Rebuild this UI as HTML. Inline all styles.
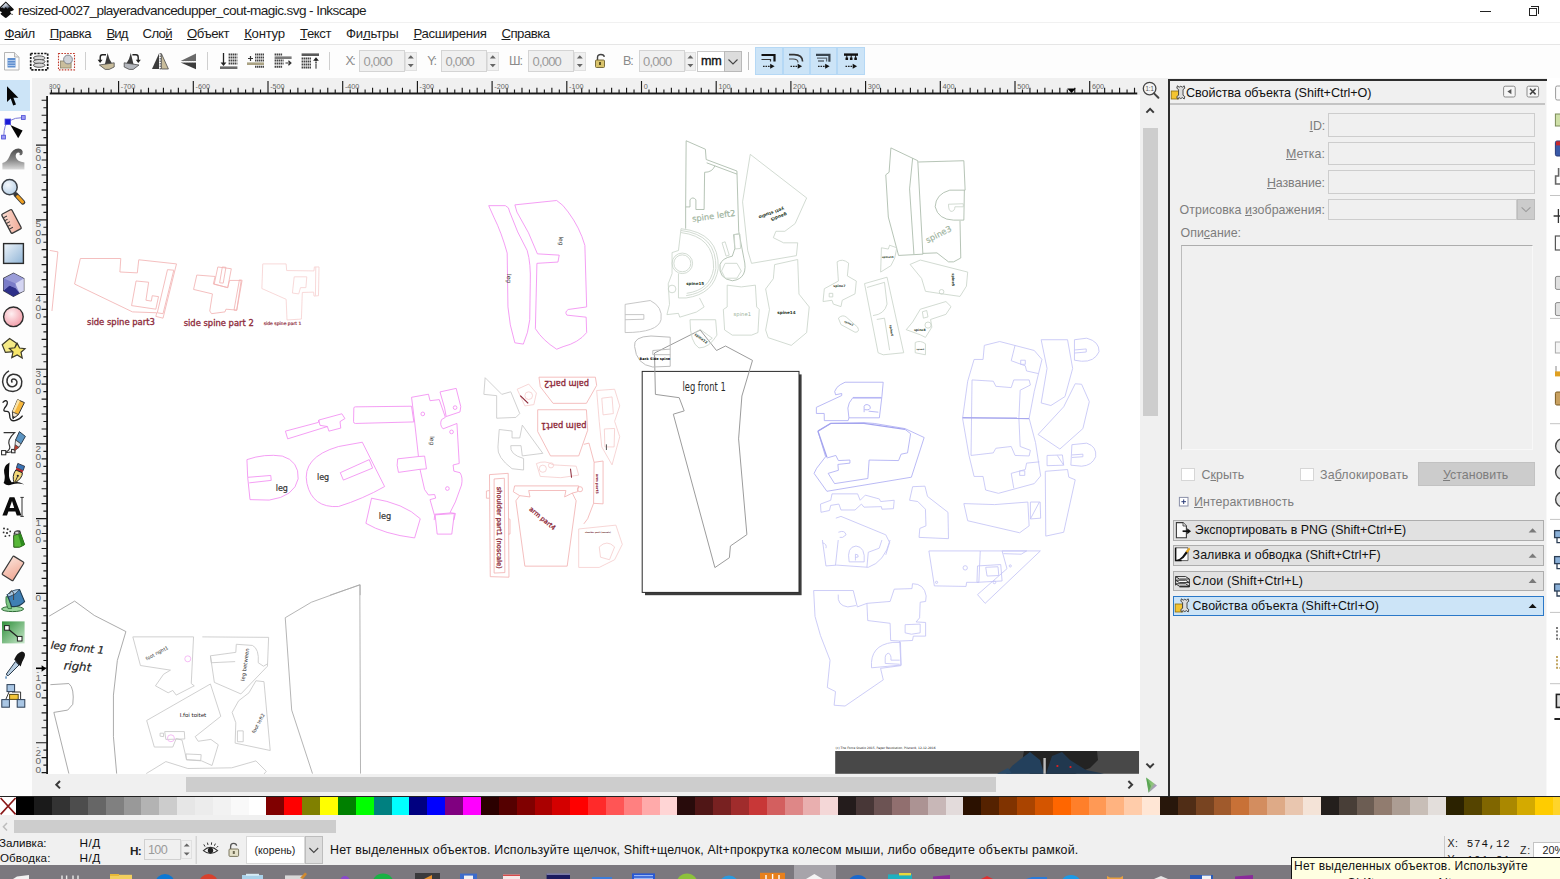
<!DOCTYPE html>
<html lang="ru"><head><meta charset="utf-8"><title>resized-0027_playeradvancedupper_cout-magic.svg - Inkscape</title>
<style>
html,body{margin:0;padding:0;background:#f0f0f0;}
body{width:1560px;height:879px;overflow:hidden;position:relative;font-family:"Liberation Sans",sans-serif;}
.a{position:absolute;box-sizing:border-box;}
.t{position:absolute;white-space:nowrap;line-height:normal;}
.t u{text-decoration:underline;text-underline-offset:1px;}
svg{position:absolute;left:0;top:0;overflow:visible;}
</style></head><body>

<div class="a" style="left:0px;top:0px;width:1560px;height:23px;background:#ffffff;"></div>
<div class="a" style="left:0px;top:23px;width:1560px;height:22px;background:#ffffff;"></div>
<div class="a" style="left:0px;top:44px;width:1560px;height:1px;background:#e6e6e6;"></div>
<div class="a" style="left:0px;top:22.4px;width:1560px;height:1px;background:#f1f1f1;"></div>
<div class="a" style="left:0px;top:45px;width:1560px;height:32.5px;background:#fdfdfd;"></div>
<div class="a" style="left:0px;top:77.5px;width:1560px;height:800px;background:#f0f0f0;"></div>
<div class="a" style="left:0px;top:77.5px;width:31.5px;height:718px;background:#fdfdfd;"></div>
<div class="a" style="left:48px;top:95px;width:1091.5px;height:679px;background:#ffffff;"></div>
<svg width="20" height="23" viewBox="0 0 20 23"><path d="M5.8 1.5 L13.6 9 Q14.2 10 13 10.6 L10.4 11.6 Q9.6 12.2 10.8 12.8 Q11.8 13.4 10.6 14.2 L6.8 17.5 Q5.8 18.3 4.8 17.5 L1 14.4 Q0 13.6 1.2 13 Q2.4 12.4 1.2 11.8 L-1.6 10.6 Q-2.8 10 -2 9 Z" fill="#0c0c0c"/><defs><linearGradient id="gLogo" x1="0" y1="0" x2=".6" y2="1"><stop offset="0" stop-color="#f2f4f8"/><stop offset=".55" stop-color="#b9c2d0"/><stop offset="1" stop-color="#3c4656"/></linearGradient></defs><path d="M5.8 2.700 L11 7.900 L9 7.300 L7.500 8.900 L5.800 7 L4.100 8.700 L2.600 7.400 L.6 8 Z" fill="url(#gLogo)"/><circle cx="12.1" cy="14.4" r=".7" fill="#444"/></svg>
<span class="t" style="left:18.00px;top:3.07px;font-size:13.6px;color:#1c1c1c;font-family:'Liberation Sans',sans-serif;letter-spacing:-0.595px;">resized-0027_playeradvancedupper_cout-magic.svg - Inkscape</span>
<div class="a" style="left:1480px;top:11px;width:11px;height:1px;background:#222;"></div>
<div class="a" style="left:1529px;top:8px;width:8px;height:8px;border:1px solid #222;"></div>
<div class="a" style="left:1531px;top:6px;width:8px;height:3px;border-top:1px solid #222;border-right:1px solid #222;"></div>
<div class="a" style="left:1538px;top:6px;width:1px;height:8px;background:#222;"></div>
<span class="t" style="left:4.50px;top:26.44px;font-size:13.2px;color:#1c1c1c;font-family:'Liberation Sans',sans-serif;letter-spacing:-0.613px;"><u>Ф</u>айл</span>
<span class="t" style="left:49.70px;top:26.44px;font-size:13.2px;color:#1c1c1c;font-family:'Liberation Sans',sans-serif;letter-spacing:-0.548px;"><u>П</u>равка</span>
<span class="t" style="left:106.50px;top:26.44px;font-size:13.2px;color:#1c1c1c;font-family:'Liberation Sans',sans-serif;letter-spacing:-0.960px;"><u>В</u>ид</span>
<span class="t" style="left:142.60px;top:26.44px;font-size:13.2px;color:#1c1c1c;font-family:'Liberation Sans',sans-serif;letter-spacing:-0.674px;">Сло<u>й</u></span>
<span class="t" style="left:187.00px;top:26.44px;font-size:13.2px;color:#1c1c1c;font-family:'Liberation Sans',sans-serif;letter-spacing:-0.492px;"><u>О</u>бъект</span>
<span class="t" style="left:244.20px;top:26.44px;font-size:13.2px;color:#1c1c1c;font-family:'Liberation Sans',sans-serif;letter-spacing:-0.285px;"><u>К</u>онтур</span>
<span class="t" style="left:300.00px;top:26.44px;font-size:13.2px;color:#1c1c1c;font-family:'Liberation Sans',sans-serif;letter-spacing:-0.446px;"><u>Т</u>екст</span>
<span class="t" style="left:346.00px;top:26.44px;font-size:13.2px;color:#1c1c1c;font-family:'Liberation Sans',sans-serif;letter-spacing:-0.190px;">Фи<u>л</u>ьтры</span>
<span class="t" style="left:413.50px;top:26.44px;font-size:13.2px;color:#1c1c1c;font-family:'Liberation Sans',sans-serif;letter-spacing:-0.376px;"><u>Р</u>асширения</span>
<span class="t" style="left:501.50px;top:26.44px;font-size:13.2px;color:#1c1c1c;font-family:'Liberation Sans',sans-serif;letter-spacing:-0.540px;"><u>С</u>правка</span>
<svg width="1560" height="879">
<path d="M4.5 52.5 h10 l4.5 4.5 v13 h-14.5z" fill="#fbfbfb" stroke="#b5b5b5"/><path d="M14.5 52.5 v4.5 h4.5" fill="#e8e8e8" stroke="#b5b5b5"/><rect x="7.5" y="58" width="8" height="9.5" fill="#5f8fd0"/><path d="M7.5 60.5h8M7.5 63h8M7.5 65.5h8" stroke="#c6d8f0" stroke-width=".8"/>
<rect x="30.7" y="53.5" width="17" height="16.4" fill="none" stroke="#1a1a1a" stroke-width="1.7" stroke-dasharray="2.2 1.2"/><ellipse cx="39.2" cy="58" rx="5.8" ry="2.1" fill="#d8d8d8" stroke="#555" stroke-width="1"/><ellipse cx="39.2" cy="61.600" rx="5.8" ry="2.1" fill="#d8d8d8" stroke="#555" stroke-width="1"/><ellipse cx="39.200" cy="65.2" rx="5.8" ry="2.1" fill="#d8d8d8" stroke="#555" stroke-width="1"/>
<rect x="58.5" y="53.5" width="16" height="16.4" fill="none" stroke="#c0392b" stroke-width="1.1" stroke-dasharray="1.6 1.3"/><rect x="60.5" y="61" width="10.6" height="7" fill="#c9bd9c" stroke="#8a8268" stroke-width=".8"/><circle cx="68" cy="59.5" r="4.4" fill="#cfd2d8" stroke="#7b8088" stroke-width=".9"/>
<path d="M85.5 52v18" stroke="#cfcfcf"/>
<path d="M107.600 53 q1.400 7 5 11.600 l-8 .8z" fill="#3c3c3c"/><path d="M99.400 65 l14.800 -2.200 v4.200 l-5 2.400 h-4z" fill="#c9bd9c" stroke="#4a4a4a" stroke-width=".8"/><path d="M106 54.800 h-3.600 q-2.200 0 -2.200 2.600 v3" fill="none" stroke="#222" stroke-width="1.4"/><path d="M97.600 59.800 h5 l-2.500 3.200z" fill="#222"/>
<path d="M130.800 53 q-1.400 7 -5 11.600 l8 .8z" fill="#3c3c3c"/><path d="M139 65 l-14.800 -2.200 v4.200 l5 2.400 h4z" fill="#b4b7bd" stroke="#4a4a4a" stroke-width=".8"/><path d="M132.400 54.800 h3.600 q2.200 0 2.200 2.600 v3" fill="none" stroke="#222" stroke-width="1.400"/><path d="M135.800 59.800 h5 l-2.500 3.200z" fill="#222"/>
<path d="M159 53.600 v15.400 h-7z" fill="#3c3c3c"/><path d="M161.400 53.600 v15.400 h7z" fill="#c9bd9c" stroke="#4a4a4a" stroke-width=".8"/><path d="M160.200 53v16.500" stroke="#333" stroke-width=".9" stroke-dasharray="1.5 1"/>
<path d="M180.600 61 l15.400 -7.400 v7.400z" fill="#6a6a6a"/><path d="M180.600 62.400 l15.400 6.800 v-6.800z" fill="#3c3c3c"/><path d="M182.500 61.700h13.500" stroke="#e8e8e8" stroke-width="1" stroke-dasharray="1.600 1"/>
<path d="M207.500 52v18" stroke="#cfcfcf"/>
<path d="M223.500 53v11" stroke="#222" stroke-width="1.3"/><path d="M220.600 62.400h5.800l-2.900 3.600z" fill="#222"/><path d="M228.600 54.500h8.800M228.600 57.500h8.800M228.600 60.500h8.800M228.600 63.500h8.800" stroke="#444" stroke-width="2" stroke-dasharray="1.500 .5"/><rect x="220" y="66.400" width="17.400" height="2.600" fill="#6a6a6a"/>
<path d="M255 54.500h9M255 57.500h9M255 60.500h9M255 66.800h9" stroke="#444" stroke-width="2" stroke-dasharray="1.500 .5"/><rect x="247" y="62.400" width="17" height="2.600" fill="#aaa283"/><path d="M250.500 56v5M248 58.500h5" stroke="#333" stroke-width="1.200"/>
<path d="M274.600 54.500h8M274.600 60.500h9M274.600 63.500h9M274.600 66.800h8" stroke="#444" stroke-width="2" stroke-dasharray="1.500 .5"/><rect x="274.600" y="56.400" width="17" height="2.600" fill="#7a7a7a"/><path d="M285.500 63h5M288.400 60.800l2.500 2.200l-2.500 2.200" stroke="#333" fill="none" stroke-width="1.200"/>
<rect x="301.600" y="53.400" width="17.400" height="2.600" fill="#5a5a5a"/><path d="M301.600 58.500h9.400M301.600 61.500h9.400M301.600 64.500h9.400M301.600 67.500h9.400" stroke="#444" stroke-width="2" stroke-dasharray="1.500 .5"/><path d="M316 60v9" stroke="#222" stroke-width="1.300" stroke-dasharray="1.500 .6"/><path d="M313.100 60.800h5.800l-2.900 -3.600z" fill="#222"/>
<path d="M329.500 52v18" stroke="#cfcfcf"/>
<path d="M597.5 60 v-2.5 q0 -3 3.4 -3 q3.2 0 3.4 2.4" fill="none" stroke="#444" stroke-width="1.4"/><rect x="595.5" y="60" width="9" height="7.5" rx="1" fill="#d9c36b" stroke="#6d6132" stroke-width=".9"/><rect x="599" y="62" width="2" height="3" fill="#5a4f20"/>
<path d="M748.5 52v18" stroke="#bdbdbd"/>
</svg>
<span class="t" style="left:345.50px;top:53.90px;font-size:12.6px;color:#8a8a8a;font-family:'Liberation Sans',sans-serif;letter-spacing:-1.702px;">X:</span>
<div class="a" style="left:359px;top:50.3px;width:46px;height:21.3px;background:#f0f0f0;border:1px solid #d4d4d4;"></div>
<span class="t" style="left:363.50px;top:53.63px;font-size:13px;color:#9a9a9a;font-family:'Liberation Sans',sans-serif;letter-spacing:-0.806px;">0,000</span>
<div class="a" style="left:405px;top:51.5px;width:11.5px;height:19.5px;background:#f0f0f0;border:1px solid #e0e0e0;"></div><svg width="1560" height="879"><path d="M407.8 58.6 l3 -3.4 l3 3.4z M407.8 63.9 l3 3.4 l3 -3.4z" fill="#666"/></svg>
<span class="t" style="left:427.30px;top:53.90px;font-size:12.6px;color:#8a8a8a;font-family:'Liberation Sans',sans-serif;letter-spacing:-1.505px;">Y:</span>
<div class="a" style="left:441px;top:50.3px;width:46px;height:21.3px;background:#f0f0f0;border:1px solid #d4d4d4;"></div>
<span class="t" style="left:445.50px;top:53.63px;font-size:13px;color:#9a9a9a;font-family:'Liberation Sans',sans-serif;letter-spacing:-0.806px;">0,000</span>
<div class="a" style="left:487px;top:51.5px;width:11.5px;height:19.5px;background:#f0f0f0;border:1px solid #e0e0e0;"></div><svg width="1560" height="879"><path d="M489.8 58.6 l3 -3.4 l3 3.4z M489.8 63.9 l3 3.4 l3 -3.4z" fill="#666"/></svg>
<span class="t" style="left:509.00px;top:53.90px;font-size:12.6px;color:#8a8a8a;font-family:'Liberation Sans',sans-serif;letter-spacing:-1.024px;">Ш:</span>
<div class="a" style="left:528px;top:50.3px;width:46px;height:21.3px;background:#f0f0f0;border:1px solid #d4d4d4;"></div>
<span class="t" style="left:532.50px;top:53.63px;font-size:13px;color:#9a9a9a;font-family:'Liberation Sans',sans-serif;letter-spacing:-0.806px;">0,000</span>
<div class="a" style="left:574px;top:51.5px;width:11.5px;height:19.5px;background:#f0f0f0;border:1px solid #e0e0e0;"></div><svg width="1560" height="879"><path d="M576.8 58.6 l3 -3.4 l3 3.4z M576.8 63.9 l3 3.4 l3 -3.4z" fill="#666"/></svg>
<span class="t" style="left:623.00px;top:53.90px;font-size:12.6px;color:#8a8a8a;font-family:'Liberation Sans',sans-serif;letter-spacing:-1.202px;">В:</span>
<div class="a" style="left:638.5px;top:50.3px;width:46.1px;height:21.3px;background:#f0f0f0;border:1px solid #d4d4d4;"></div>
<span class="t" style="left:643.00px;top:53.63px;font-size:13px;color:#9a9a9a;font-family:'Liberation Sans',sans-serif;letter-spacing:-0.806px;">0,000</span>
<div class="a" style="left:684.6px;top:51.5px;width:11.5px;height:19.5px;background:#f0f0f0;border:1px solid #e0e0e0;"></div><svg width="1560" height="879"><path d="M687.4 58.6 l3 -3.4 l3 3.4z M687.4 63.9 l3 3.4 l3 -3.4z" fill="#666"/></svg>
<div class="a" style="left:697px;top:50.5px;width:28px;height:21.5px;background:#ffffff;border:1px solid #c9c9c9;"></div>
<span class="t" style="left:701.00px;top:53.80px;font-size:12.6px;color:#111;font-family:'Liberation Sans',sans-serif;letter-spacing:-0.246px;-webkit-text-stroke:.35px #111;">mm</span>
<div class="a" style="left:724px;top:50.5px;width:18px;height:21.5px;background:#dcdcdc;border:1px solid #b9b9b9;"></div>
<svg width="1560" height="879"><path d="M728.5 59.5l4.5 4.5l4.5 -4.5" fill="none" stroke="#444" stroke-width="1.1"/></svg>
<div class="a" style="left:755.4px;top:47px;width:27.4px;height:27.6px;background:#cce4f7;border:1px solid #b5d8f5;"></div>
<div class="a" style="left:782.65px;top:47px;width:27.4px;height:27.6px;background:#cce4f7;border:1px solid #b5d8f5;"></div>
<div class="a" style="left:809.9px;top:47px;width:27.4px;height:27.6px;background:#cce4f7;border:1px solid #b5d8f5;"></div>
<div class="a" style="left:837.15px;top:47px;width:27.4px;height:27.6px;background:#cce4f7;border:1px solid #b5d8f5;"></div>
<svg width="1560" height="879">
<path d="M761.5 55h13v6.5" fill="none" stroke="#111" stroke-width="2.2"/><path d="M761.5 59.5h9v2" fill="none" stroke="#333" stroke-width="1.2"/><path d="M763.0 66.3h8" stroke="#222" stroke-width="1.3" stroke-dasharray="1.6 .9"/><path d="M770.2 63.8l4.4 2.5l-4.4 2.5z" fill="#111"/>
<path d="M789 54.6h5q8.6 0 8.6 7" fill="none" stroke="#333" stroke-width="1.6"/><path d="M789 59h4q5 0 5 3.4" fill="none" stroke="#444" stroke-width="1.1"/><path d="M790.5 66.3h8" stroke="#222" stroke-width="1.3" stroke-dasharray="1.6 .9"/><path d="M797.7 63.8l4.4 2.5l-4.4 2.5z" fill="#111"/>
<path d="M816 54.8h13.4v7" fill="none" stroke="#3a4650" stroke-width="2.2"/><path d="M817 58.2h9.6v3.4M818 61h6" fill="none" stroke="#5d6a75" stroke-width="1.3"/><path d="M818.0 66.3h8" stroke="#222" stroke-width="1.3" stroke-dasharray="1.6 .9"/><path d="M825.2 63.8l4.4 2.5l-4.4 2.5z" fill="#111"/>
<path d="M844 54.6h14" stroke="#111" stroke-width="2.4"/><path d="M845.5 58.8h11.5" stroke="#111" stroke-width="2.6" stroke-dasharray="2.6 1.8"/><path d="M846.8 55v4M851.2 55v4M855.6 55v4" stroke="#111" stroke-width="1"/><path d="M845.5 66.3h8" stroke="#222" stroke-width="1.3" stroke-dasharray="1.6 .9"/><path d="M852.7 63.8l4.4 2.5l-4.4 2.5z" fill="#111"/>
</svg>
<div class="a" style="left:0px;top:80px;width:29.6px;height:30.8px;background:#cce4f7;"></div>
<svg width="60" height="879" viewBox="0 0 60 879">
<defs>
<linearGradient id="gRect" x1="0" y1="0" x2="1" y2="1"><stop offset="0" stop-color="#eef4fa"/><stop offset="1" stop-color="#8fb4d6"/></linearGradient>
<radialGradient id="gCirc" cx=".4" cy=".35" r=".7"><stop offset="0" stop-color="#fff0f2"/><stop offset="1" stop-color="#f29aa6"/></radialGradient>
<linearGradient id="gWave" x1="0" y1="0" x2="0" y2="1"><stop offset="0" stop-color="#4d4d4d"/><stop offset=".55" stop-color="#8a8a8a"/><stop offset="1" stop-color="#dcdcdc"/></linearGradient>
<radialGradient id="gLens" cx=".4" cy=".35" r=".7"><stop offset="0" stop-color="#f4f8fc"/><stop offset="1" stop-color="#b6cfe6"/></radialGradient>
<linearGradient id="gGrad" x1="0" y1="0" x2="1" y2="1"><stop offset="0" stop-color="#2f8f3a"/><stop offset="1" stop-color="#c9e8cc"/></linearGradient>
<linearGradient id="gEr" x1="0" y1="0" x2="1" y2="1"><stop offset="0" stop-color="#fbe0d6"/><stop offset="1" stop-color="#f0a894"/></linearGradient>
</defs>
<path d="M7 86.2 L7 102 L10.7 98.6 L13.2 105.6 L16 104.4 L13.4 97.8 L18.4 97.8 Z" fill="#050505"/>
<path d="M3.8 136 Q4 124 9 121 Q15 117.4 23 117.6" fill="none" stroke="#7a7ad8" stroke-width="1"/>
<rect x="5" y="119" width="5.6" height="5.6" fill="#1a1ad6" stroke="#5050e0" stroke-width=".8"/><rect x="21.4" y="115.6" width="3.8" height="3.8" fill="#9b9bf0" stroke="#4a4ad8" stroke-width=".8"/><rect x="1.6" y="135.2" width="3.8" height="3.8" fill="#9b9bf0" stroke="#4a4ad8" stroke-width=".8"/>
<path d="M10.4 125 L22.6 130.6 L18.2 138.2 Z" fill="#050505"/>
<path d="M2.4 169.6 L2.4 163 Q7 162 9.4 156.4 Q12.4 148.6 18.4 148.6 Q23.4 149.4 22.6 153.4 Q21.6 156 19.4 155 Q20.6 152.6 18.2 152.4 Q15.2 153 15.8 157 Q17 161.6 24.4 162.6 L24.4 169.6 Z" fill="url(#gWave)"/>
<path d="M15.6 194.4 L23 202.4" stroke="#3a3a3a" stroke-width="4.6" stroke-linecap="round"/><path d="M17.6 196.6 L22.6 202" stroke="#f0a020" stroke-width="3" stroke-linecap="round"/><circle cx="9.6" cy="187.2" r="7.6" fill="url(#gLens)" stroke="#3a3f46" stroke-width="1.5"/>
<g transform="rotate(-28 11.6 221.4)"><rect x="5.8" y="210.6" width="11.4" height="21.6" rx="1.2" fill="url(#gEr)" stroke="#3a3a3a" stroke-width="1.3"/><path d="M6 214.4h4M6 217.6h3M6 220.8h4M6 224h3M6 227.2h4" stroke="#3a3a3a" stroke-width="1"/></g>
<rect x="3.6" y="243.6" width="19.8" height="19.8" fill="url(#gRect)" stroke="#2c2c2c" stroke-width="1.4"/>
<path d="M13.6 273.2 L23.8 278.6 L23.8 291 L13.4 296.4 L3.6 290.6 L3.6 278.4 Z" fill="#8d8fd0" stroke="#3c3c44" stroke-width="1.2"/><path d="M13.6 273.2 L23.8 278.6 L15.4 283.4 L3.6 278.4 Z" fill="#9a9cd8"/><path d="M15.4 283.4 L23.8 278.6 L23.8 291 L19.4 293 Z" fill="#d4d5f2"/><path d="M3.6 290.6 L9.4 285.6 L15.4 288 L19.4 293 L13.4 296.4 Z" fill="#2d2f88"/><path d="M3.6 278.4 L15.4 283.4 L15.4 288 L9.4 285.6 L3.6 290.6Z" fill="#7a7cc8"/>
<circle cx="13.4" cy="316.8" r="9.8" fill="url(#gCirc)" stroke="#2c2c2c" stroke-width="1.4"/>
<path d="M9.6 338.6 L16.6 343.2 L13.6 351.6 L5.4 352.4 L2.2 344.8 Z" fill="#f5ea86" stroke="#3c3a2a" stroke-width="1.2"/><path d="M17.2 343.4 L19.6 348 L25 348.6 L21 352.2 L22.2 358 L17.2 355 L11.8 357.6 L13 352 L9.4 348.4 L14.8 347.8 Z" fill="#f7e66a" stroke="#3c3a2a" stroke-width="1.2"/>
<path d="M12.4 382.6 Q10.6 380.6 12.6 379.2 Q15.6 378.2 16.8 381.2 Q17.6 385.2 13.6 386.6 Q8.4 387.4 7 382 Q6.4 375.6 12.8 374.2 Q20.6 373.8 21.8 381.4 Q22.2 390.4 13 391.6 Q3.6 391.4 2.6 382 Q2.8 374 9 370.8" fill="none" stroke="#333" stroke-width="1.5"/>
<path d="M2.6 402.6 Q5.6 399.4 7.2 401.6 Q8 404 4.6 408 Q2.4 411.6 6.4 411.4 Q9.4 411 9.6 415 Q9.6 421.6 15 420.6 Q19.6 419.6 22.6 415.6" fill="none" stroke="#222" stroke-width="1.3"/><path d="M17.6 399.6 L24.4 402.6 L18.4 414.6 L13 418.6 L12.4 411.8 Z" fill="#f6b73c" stroke="#333" stroke-width="1"/><path d="M17.6 399.6 L20 400.8 L14.4 412.4 L12.4 411.8Z" fill="#fbe3a6"/><path d="M12.4 411.8 L18.4 414.6 L13 418.6Z" fill="#f3e6cf" stroke="#333" stroke-width=".8"/><path d="M13 418.6l.2-2.6l2 1z" fill="#222"/>
<path d="M3.6 432.6 L14.6 432.6 Q6.6 440 9.6 446 Q10.6 449 7 451.6 L3.6 453" fill="none" stroke="#333" stroke-width="1.2"/><rect x="1.6" y="450.6" width="4.2" height="4.2" fill="#fff" stroke="#222" stroke-width="1"/><path d="M5.8 452.8 L13 451.6" stroke="#333" stroke-width="1"/><rect x="11.6" y="449.4" width="3.4" height="3.4" fill="#fff" stroke="#222" stroke-width="1"/><path d="M19.4 431.6 L25.4 436.4 L21 444 L15.6 440 Z" fill="#5b94c2" stroke="#2d3d4c" stroke-width="1"/><path d="M15.6 440 L21 444 L19 447.4 L15 444.8Z" fill="#e8e8e8" stroke="#444" stroke-width=".8"/><path d="M15 444.8 L19 447.4 L14 451.2Z" fill="#c03c2c" stroke="#444" stroke-width=".7"/>
<path d="M9.6 462.4 Q3 466 4.2 473 Q5.6 478.6 3.6 483 Q7.2 486.4 11.6 484.6 Q17 482.6 24.4 484.4 Q18 480.6 11.6 482.2 Q8.6 479 9 473 Q9 466.6 9.6 462.4Z" fill="#0a0a0a"/><path d="M17.8 463.4 L24.6 466.2 L23.2 470.6 L16.4 467.8Z" fill="#3a74b4" stroke="#223" stroke-width=".8"/><path d="M16.4 467.8 L23.2 470.6 L22.4 472.8 L15.8 470Z" fill="#b8262a"/><path d="M15.8 470 L22.4 472.8 Q22.6 478 14.4 483.4 Q11.4 476 15.8 470Z" fill="#f2d87a" stroke="#222" stroke-width="1"/><path d="M14.6 483 L17.6 476.4" stroke="#222" stroke-width=".9"/><circle cx="17.8" cy="475.8" r="1.1" fill="#222"/>
<path d="M2.4 515.6 L9.6 497.2 L14.4 497.2 L21.4 515.6 L16.8 515.6 L15.4 511.4 L8.4 511.4 L7 515.6 Z M9.6 508 L14.2 508 L12 501 Z" fill="#0a0a0a" fill-rule="evenodd"/><path d="M22 497.4v19M20.4 497.4h3.4M20.4 516.4h3.4" stroke="#333" stroke-width="1"/>
<path d="M13.6 535.4 L20.6 533.4 L24.6 544.6 Q20 548.6 13.8 547.2 Z" fill="#58b838" stroke="#2a5a1a" stroke-width="1"/><path d="M18 534.2l2.6-.8l4 11.2q-1.4 1.4-3 2z" fill="#2e8a1e"/><path d="M14 534.6 Q15 530 19.6 531.2 L20.4 533.6" fill="none" stroke="#333" stroke-width="1.5"/><rect x="15" y="531.4" width="3.6" height="2.6" fill="#ddd" stroke="#444" stroke-width=".6"/><g fill="#333"><circle cx="4" cy="528.4" r="1"/><circle cx="7.6" cy="529.2" r="1"/><circle cx="3.6" cy="532.4" r=".9"/><circle cx="7" cy="533" r="1.1"/><circle cx="10.2" cy="531.4" r=".9"/><circle cx="5.4" cy="536.2" r=".9"/><circle cx="9.4" cy="535.6" r=".9"/></g>
<g transform="rotate(32 13 568.4)"><rect x="6.6" y="557.6" width="12.8" height="21.6" rx="1" fill="url(#gEr)" stroke="#3a3a3a" stroke-width="1.2"/></g>
<ellipse cx="12.6" cy="609" rx="11" ry="2.6" fill="#9ad69e" stroke="#2c6a34" stroke-width="1"/><path d="M6 596.6 Q5 603 8 608.6 L11.6 608.6 Q9.6 602 10.4 597.4Z" fill="#7cc684" stroke="#2c6a34" stroke-width=".8"/><path d="M7.2 594.8 L19.6 589.6 L24.6 601.6 Q19 607.6 11.6 606.4 Z" fill="#3f7fb4" stroke="#1f3a50" stroke-width="1.1"/><path d="M7.2 594.8 Q12 589.4 19.6 589.6 Q16 594.8 8.6 597Z" fill="#a8c8e2" stroke="#1f3a50" stroke-width=".8"/><path d="M9.6 594 Q11 587.6 13.6 593.4 L13.6 600" fill="none" stroke="#444" stroke-width="1"/>
<rect x="2" y="621.4" width="22.6" height="22" fill="url(#gGrad)"/><path d="M7 628 L19.6 638.6" stroke="#222" stroke-width="1.3"/><rect x="4.6" y="625.6" width="4.6" height="4.6" fill="#fff" stroke="#222" stroke-width="1"/><rect x="17.4" y="636.4" width="4.6" height="4.6" fill="#fff" stroke="#222" stroke-width="1"/>
<path d="M15.4 661.6 L19 665 L8.6 675.4 Q6.6 676.2 6.4 674 Z" fill="#b9cfe2" stroke="#2a3a4a" stroke-width="1"/><path d="M14.2 659.6 Q17 652.6 22 651.6 Q26.4 652.4 24.4 657.6 Q21.6 662.6 20.6 666.4 Z" fill="#161616"/><path d="M6 675.4 q-1.6 2.6 0 3.6 q1.8 -.8 0 -3.6z" fill="#5a8ab8"/>
<path d="M12 692 L20.6 692 L20.6 699 M9 692 L6 699" fill="none" stroke="#333" stroke-width="1"/><rect x="7" y="684.6" width="7.6" height="7" fill="#a9c6e4" stroke="#2c3e55" stroke-width="1"/><rect x="9.6" y="694.4" width="8.6" height="5" fill="#f3c63a" stroke="#5a4a10" stroke-width="1"/><rect x="1.8" y="699.6" width="7.6" height="7.6" fill="#a9c6e4" stroke="#2c3e55" stroke-width="1"/><rect x="17.2" y="699.6" width="7.6" height="7.6" fill="#a9c6e4" stroke="#2c3e55" stroke-width="1"/>
</svg>
<svg width="1560" height="879" font-family="'Liberation Sans',sans-serif" font-size="7.8" fill="#666">
<clipPath id="hrc"><rect x="49.5" y="77" width="1088" height="19"/></clipPath><clipPath id="vrc"><rect x="31" y="96" width="18" height="678"/></clipPath>
<g clip-path="url(#hrc)">
<rect x="49.5" y="92.5" width="1088" height="1.9" fill="#1a1a1a"/>
<path d="M43.90 81V93M51.37 89.6V93M58.84 87.7V93M66.31 89.6V93M73.78 87.7V93M81.25 89.6V93M88.72 87.7V93M96.19 89.6V93M103.66 87.7V93M111.13 89.6V93M118.60 81V93M126.07 89.6V93M133.54 87.7V93M141.01 89.6V93M148.48 87.7V93M155.95 89.6V93M163.42 87.7V93M170.89 89.6V93M178.36 87.7V93M185.83 89.6V93M193.30 81V93M200.77 89.6V93M208.24 87.7V93M215.71 89.6V93M223.18 87.7V93M230.65 89.6V93M238.12 87.7V93M245.59 89.6V93M253.06 87.7V93M260.53 89.6V93M268.00 81V93M275.47 89.6V93M282.94 87.7V93M290.41 89.6V93M297.88 87.7V93M305.35 89.6V93M312.82 87.7V93M320.29 89.6V93M327.76 87.7V93M335.23 89.6V93M342.70 81V93M350.17 89.6V93M357.64 87.7V93M365.11 89.6V93M372.58 87.7V93M380.05 89.6V93M387.52 87.7V93M394.99 89.6V93M402.46 87.7V93M409.93 89.6V93M417.40 81V93M424.87 89.6V93M432.34 87.7V93M439.81 89.6V93M447.28 87.7V93M454.75 89.6V93M462.22 87.7V93M469.69 89.6V93M477.16 87.7V93M484.63 89.6V93M492.10 81V93M499.57 89.6V93M507.04 87.7V93M514.51 89.6V93M521.98 87.7V93M529.45 89.6V93M536.92 87.7V93M544.39 89.6V93M551.86 87.7V93M559.33 89.6V93M566.80 81V93M574.27 89.6V93M581.74 87.7V93M589.21 89.6V93M596.68 87.7V93M604.15 89.6V93M611.62 87.7V93M619.09 89.6V93M626.56 87.7V93M634.03 89.6V93M641.50 81V93M648.97 89.6V93M656.44 87.7V93M663.91 89.6V93M671.38 87.7V93M678.85 89.6V93M686.32 87.7V93M693.79 89.6V93M701.26 87.7V93M708.73 89.6V93M716.20 81V93M723.67 89.6V93M731.14 87.7V93M738.61 89.6V93M746.08 87.7V93M753.55 89.6V93M761.02 87.7V93M768.49 89.6V93M775.96 87.7V93M783.43 89.6V93M790.90 81V93M798.37 89.6V93M805.84 87.7V93M813.31 89.6V93M820.78 87.7V93M828.25 89.6V93M835.72 87.7V93M843.19 89.6V93M850.66 87.7V93M858.13 89.6V93M865.60 81V93M873.07 89.6V93M880.54 87.7V93M888.01 89.6V93M895.48 87.7V93M902.95 89.6V93M910.42 87.7V93M917.89 89.6V93M925.36 87.7V93M932.83 89.6V93M940.30 81V93M947.77 89.6V93M955.24 87.7V93M962.71 89.6V93M970.18 87.7V93M977.65 89.6V93M985.12 87.7V93M992.59 89.6V93M1000.06 87.7V93M1007.53 89.6V93M1015.00 81V93M1022.47 89.6V93M1029.94 87.7V93M1037.41 89.6V93M1044.88 87.7V93M1052.35 89.6V93M1059.82 87.7V93M1067.29 89.6V93M1074.76 87.7V93M1082.23 89.6V93M1089.70 81V93M1097.17 89.6V93M1104.64 87.7V93M1112.11 89.6V93M1119.58 87.7V93M1127.05 89.6V93M1134.52 87.7V93M1141.99 89.6V93" stroke="#1a1a1a" stroke-width="1.15" fill="none"/>
<text x="46.1" y="89.4" textLength="14.45" lengthAdjust="spacingAndGlyphs">-800</text>
<text x="120.8" y="89.4" textLength="14.45" lengthAdjust="spacingAndGlyphs">-700</text>
<text x="195.5" y="89.4" textLength="14.45" lengthAdjust="spacingAndGlyphs">-600</text>
<text x="270.2" y="89.4" textLength="14.45" lengthAdjust="spacingAndGlyphs">-500</text>
<text x="344.9" y="89.4" textLength="14.45" lengthAdjust="spacingAndGlyphs">-400</text>
<text x="419.6" y="89.4" textLength="14.45" lengthAdjust="spacingAndGlyphs">-300</text>
<text x="494.3" y="89.4" textLength="14.45" lengthAdjust="spacingAndGlyphs">-200</text>
<text x="569.0" y="89.4" textLength="14.45" lengthAdjust="spacingAndGlyphs">-100</text>
<text x="643.7" y="89.4" textLength="4.05" lengthAdjust="spacingAndGlyphs">0</text>
<text x="718.4" y="89.4" textLength="12.15" lengthAdjust="spacingAndGlyphs">100</text>
<text x="793.1" y="89.4" textLength="12.15" lengthAdjust="spacingAndGlyphs">200</text>
<text x="867.8" y="89.4" textLength="12.15" lengthAdjust="spacingAndGlyphs">300</text>
<text x="942.5" y="89.4" textLength="12.15" lengthAdjust="spacingAndGlyphs">400</text>
<text x="1017.2" y="89.4" textLength="12.15" lengthAdjust="spacingAndGlyphs">500</text>
<text x="1091.9" y="89.4" textLength="12.15" lengthAdjust="spacingAndGlyphs">600</text>
<path d="M1067.2 88.4h8.6l-4.3 4.6z" fill="#000"/>
</g>
<g clip-path="url(#vrc)">
<rect x="46.2" y="96" width="1.8" height="678" fill="#1a1a1a"/>
<path d="M43.4 780.05H47M41.6 772.58H47M43.4 765.11H47M41.6 757.64H47M43.4 750.17H47M36 742.70H47M43.4 735.23H47M41.6 727.76H47M43.4 720.29H47M41.6 712.82H47M43.4 705.35H47M41.6 697.88H47M43.4 690.41H47M41.6 682.94H47M43.4 675.47H47M36 668.00H47M43.4 660.53H47M41.6 653.06H47M43.4 645.59H47M41.6 638.12H47M43.4 630.65H47M41.6 623.18H47M43.4 615.71H47M41.6 608.24H47M43.4 600.77H47M36 593.30H47M43.4 585.83H47M41.6 578.36H47M43.4 570.89H47M41.6 563.42H47M43.4 555.95H47M41.6 548.48H47M43.4 541.01H47M41.6 533.54H47M43.4 526.07H47M36 518.60H47M43.4 511.13H47M41.6 503.66H47M43.4 496.19H47M41.6 488.72H47M43.4 481.25H47M41.6 473.78H47M43.4 466.31H47M41.6 458.84H47M43.4 451.37H47M36 443.90H47M43.4 436.43H47M41.6 428.96H47M43.4 421.49H47M41.6 414.02H47M43.4 406.55H47M41.6 399.08H47M43.4 391.61H47M41.6 384.14H47M43.4 376.67H47M36 369.20H47M43.4 361.73H47M41.6 354.26H47M43.4 346.79H47M41.6 339.32H47M43.4 331.85H47M41.6 324.38H47M43.4 316.91H47M41.6 309.44H47M43.4 301.97H47M36 294.50H47M43.4 287.03H47M41.6 279.56H47M43.4 272.09H47M41.6 264.62H47M43.4 257.15H47M41.6 249.68H47M43.4 242.21H47M41.6 234.74H47M43.4 227.27H47M36 219.80H47M43.4 212.33H47M41.6 204.86H47M43.4 197.39H47M41.6 189.92H47M43.4 182.45H47M41.6 174.98H47M43.4 167.51H47M41.6 160.04H47M43.4 152.57H47M36 145.10H47M43.4 137.63H47M41.6 130.16H47M43.4 122.69H47M41.6 115.22H47M43.4 107.75H47M41.6 100.28H47M43.4 92.81H47" stroke="#1a1a1a" stroke-width="1.15" fill="none"/>
<text x="36.4" y="748.8">-</text>
<text x="35.6" y="755.8" font-size="8.8" textLength="5.6" lengthAdjust="spacingAndGlyphs">2</text>
<text x="35.6" y="764.2" font-size="8.8" textLength="5.6" lengthAdjust="spacingAndGlyphs">0</text>
<text x="35.6" y="772.6" font-size="8.8" textLength="5.6" lengthAdjust="spacingAndGlyphs">0</text>
<text x="36.4" y="674.1">-</text>
<text x="35.6" y="681.1" font-size="8.8" textLength="5.6" lengthAdjust="spacingAndGlyphs">1</text>
<text x="35.6" y="689.5" font-size="8.8" textLength="5.6" lengthAdjust="spacingAndGlyphs">0</text>
<text x="35.6" y="697.9" font-size="8.8" textLength="5.6" lengthAdjust="spacingAndGlyphs">0</text>
<text x="35.6" y="600.9" font-size="8.8" textLength="5.6" lengthAdjust="spacingAndGlyphs">0</text>
<text x="35.6" y="526.2" font-size="8.8" textLength="5.6" lengthAdjust="spacingAndGlyphs">1</text>
<text x="35.6" y="534.6" font-size="8.8" textLength="5.6" lengthAdjust="spacingAndGlyphs">0</text>
<text x="35.6" y="543.0" font-size="8.8" textLength="5.6" lengthAdjust="spacingAndGlyphs">0</text>
<text x="35.6" y="451.5" font-size="8.8" textLength="5.6" lengthAdjust="spacingAndGlyphs">2</text>
<text x="35.6" y="459.9" font-size="8.8" textLength="5.6" lengthAdjust="spacingAndGlyphs">0</text>
<text x="35.6" y="468.3" font-size="8.8" textLength="5.6" lengthAdjust="spacingAndGlyphs">0</text>
<text x="35.6" y="376.8" font-size="8.8" textLength="5.6" lengthAdjust="spacingAndGlyphs">3</text>
<text x="35.6" y="385.2" font-size="8.8" textLength="5.6" lengthAdjust="spacingAndGlyphs">0</text>
<text x="35.6" y="393.6" font-size="8.8" textLength="5.6" lengthAdjust="spacingAndGlyphs">0</text>
<text x="35.6" y="302.1" font-size="8.8" textLength="5.6" lengthAdjust="spacingAndGlyphs">4</text>
<text x="35.6" y="310.5" font-size="8.8" textLength="5.6" lengthAdjust="spacingAndGlyphs">0</text>
<text x="35.6" y="318.9" font-size="8.8" textLength="5.6" lengthAdjust="spacingAndGlyphs">0</text>
<text x="35.6" y="227.4" font-size="8.8" textLength="5.6" lengthAdjust="spacingAndGlyphs">5</text>
<text x="35.6" y="235.8" font-size="8.8" textLength="5.6" lengthAdjust="spacingAndGlyphs">0</text>
<text x="35.6" y="244.2" font-size="8.8" textLength="5.6" lengthAdjust="spacingAndGlyphs">0</text>
<text x="35.6" y="152.7" font-size="8.8" textLength="5.6" lengthAdjust="spacingAndGlyphs">6</text>
<text x="35.6" y="161.1" font-size="8.8" textLength="5.6" lengthAdjust="spacingAndGlyphs">0</text>
<text x="35.6" y="169.5" font-size="8.8" textLength="5.6" lengthAdjust="spacingAndGlyphs">0</text>
<path d="M41.6 665.2v6.6l4.6-3.3z" fill="#000"/><path d="M36 668.5h6" stroke="#000" stroke-width="1.2"/>
</g>
</svg>
<svg width="1560" height="879" viewBox="0 0 1560 879">
<clipPath id="cv"><rect x="48" y="95" width="1091.5" height="679"/></clipPath>
<g clip-path="url(#cv)" fill="none" stroke-width=".85" style="vector-effect:non-scaling-stroke">
<style>#drw path,#drw circle{vector-effect:non-scaling-stroke}</style>
<g id="drw">
<g fill="none" stroke-width="1"><rect x="645" y="374.4" width="156.6" height="220.8" fill="#3c3c3c" stroke="none"/><rect x="642.2" y="371.4" width="156.8" height="221" fill="#fff" stroke="#2a2a2a" stroke-width="1"/><path d="M654.5 353L700.2 330L716.5 350.5L725.5 346L752.5 360.4L741.9 396L738.6 438.9L746.9 534.6L730.4 546L729.4 557.7L714.9 567.6L673.3 414.2L684.2 410.900L679.2 397.7L655.4 394.4Z" stroke="#9c9c9c"/><text x="682.4" y="391" font-size="12.6" fill="#2a2a2a" stroke="none" font-family="'DejaVu Sans Condensed','DejaVu Sans','Liberation Sans',sans-serif" textLength="43.4" lengthAdjust="spacingAndGlyphs" >leg front 1</text><path d="M634.6 346.5Q633 336.6 651 336L670.2 337.2L670.2 366.3L652.8 367Q636.3 364.6 634.6 346.5Z M652.8 350.5L670.2 349.1 M652.8 350.5L652.8 354.7L670.2 354.7" stroke="#bdbdbd"/><text x="639.6" y="359.6" font-size="3.44" fill="#000" stroke="none" font-family="'DejaVu Sans','Liberation Sans',sans-serif" textLength="30.6" lengthAdjust="spacingAndGlyphs" font-weight="bold">Back Side spine</text></g>
<g transform="translate(48,240) scale(0.17972)" stroke="#f2b4b4" ><path d="M180 103L405 103L400 178L497 183L505 110L715 133L640 435L600 425L605 405L470 400L148 245Z" /><path d="M490 228L560 235L545 335L575 340L580 310L615 315L600 385L465 365Z" /><path d="M665 165L700 168L640 410L608 405Z" /><path d="M10 58L55 66L22 395" /><path d="M828 195L930 203L920 245L1000 265L1010 225L1075 225L1050 390L990 385L985 400L910 410L900 395L915 300L810 275Z" /><path d="M945 150L1020 160L1000 265L925 245Z M970 150L990 152L975 240L955 238Z" /><path d="M1065 222L1080 224L1050 392L1035 390Z" /><path d="M1195 133L1325 133L1328 170L1480 172L1482 150L1508 150L1505 310L1480 312L1478 290L1415 292L1410 440L1330 445L1325 330L1190 270Z M1370 205L1440 205L1435 265L1405 265L1395 300L1360 295Z M1490 150L1488 310" stroke="#f7d2d2"/><text x="217" y="472" font-size="46.93" fill="#8e2c3c" stroke="#8e2c3c" stroke-width="1.8" font-family="'DejaVu Sans','Liberation Sans',sans-serif" textLength="378" lengthAdjust="spacingAndGlyphs" >side spine part3</text><text x="755" y="478" font-size="46.58" fill="#8e2c3c" stroke="#8e2c3c" stroke-width="1.8" font-family="'DejaVu Sans','Liberation Sans',sans-serif" textLength="390" lengthAdjust="spacingAndGlyphs" >side spine part 2</text><text x="1200" y="472" font-size="25.08" fill="#8e2c3c" stroke="#8e2c3c" stroke-width="1" font-family="'DejaVu Sans','Liberation Sans',sans-serif" textLength="210" lengthAdjust="spacingAndGlyphs" >side spine part 1</text></g>
<g transform="translate(240,385) scale(0.15385)" stroke="#f28cf2" ><path d="M45 485Q160 445 275 462Q385 495 378 610Q355 725 190 748L65 745L50 600Z M52 600L200 588L203 620L60 636" /><path d="M795 372L940 660Q800 740 640 790Q470 800 435 640Q400 470 640 400Z M652 570L840 485L862 540L672 618Z" /><path d="M295 300L510 243L512 228L662 187L682 218L650 238L655 280L578 300L568 270L310 350Z M512 228L520 262L568 270" /><path d="M740 150Q740 142 750 142L1115 138L1130 240L750 250Q738 250 738 238Z" /><path d="M1300 45L1405 22L1435 140L1430 175L1340 205L1330 150Z" /><path d="M1115 80L1225 60L1235 102L1295 95L1335 210L1310 225Q1295 260 1320 285L1410 250L1425 510L1385 520L1390 560L1430 570Q1450 600 1440 650L1400 760L1365 830L1400 835L1390 878 M1115 80L1135 240L1160 465L1025 480Q1015 520 1030 568L1170 548L1200 680L1225 715L1265 712L1272 735L1235 745L1265 850L1262 878 M1160 465L1200 462L1212 545L1170 548 M1265 840L1365 832" /><circle cx="1188" cy="188" r="12" /><circle cx="1375" cy="305" r="12" /><circle cx="1348" cy="673" r="12" /><circle cx="1398" cy="147" r="12" /><text x="232" y="690" font-size="52" fill="#333" stroke="#333" stroke-width="1.2" font-family="'DejaVu Sans','Liberation Sans',sans-serif" >leg</text><text x="500" y="620" font-size="52" fill="#333" stroke="#333" stroke-width="1.2" font-family="'DejaVu Sans','Liberation Sans',sans-serif" >leg</text><text x="1232" y="333" font-size="38" fill="#333" stroke="none" font-family="'DejaVu Sans','Liberation Sans',sans-serif" transform="rotate(90 1232 333)" >leg</text></g>
<g transform="translate(230,370) scale(0.25641)" stroke="#f2b4b4" ><path d="M995 30L1060 95L1095 85L1130 170L1115 185L1040 188L1040 100L990 95Z" stroke="#c9c9c9"/><path d="M1050 232L1100 238L1100 265L1130 265L1140 215L1220 325L1140 335L1135 295L1095 295Q1090 330 1145 345L1145 390L1100 385Q1040 340 1045 300Z" stroke="#c9c9c9"/><path d="M552 500Q680 520 742 580L720 655Q600 640 530 598Z" stroke="#f28cf2"/><text x="580" y="580" font-size="32" fill="#333" stroke="#333" stroke-width="0.7" font-family="'DejaVu Sans','Liberation Sans',sans-serif" >leg</text><path d="M800 565L875 560L865 640L808 640Z" stroke="#f28cf2"/><path d="M1205 28L1425 28L1430 60L1390 130L1260 130L1210 65Z" /><path d="M1200 155L1390 155L1395 235L1360 335L1250 335L1200 240Z" /><text x="1400" y="44" font-size="31.79" fill="#8c2636" stroke="#8c2636" stroke-width="1.2" font-family="'DejaVu Sans','Liberation Sans',sans-serif" textLength="175" lengthAdjust="spacingAndGlyphs" transform="rotate(180 1400 44)" >palm part2</text><text x="1390" y="205" font-size="32.16" fill="#8c2636" stroke="#8c2636" stroke-width="1.2" font-family="'DejaVu Sans','Liberation Sans',sans-serif" textLength="177" lengthAdjust="spacingAndGlyphs" transform="rotate(180 1390 205)" >palm part1</text><path d="M1120 75L1165 55L1195 90L1185 135L1150 140Z" stroke="#f6cfcf"/><circle cx="1165" cy="100" r="15" stroke="#f6cfcf"/><path d="M1132 100L1163 130" stroke="#8c2636" stroke-width="1.2"/><path d="M1430 80L1500 75L1520 140L1500 200L1520 260L1490 370L1450 300L1440 200Z M1450 110L1490 105L1495 170L1455 175Z M1460 230L1500 228L1498 300L1462 300Z" stroke="#f6cfcf"/><path d="M1195 365Q1230 350 1260 370L1350 375L1360 410L1290 420L1210 415Z" stroke="#f6cfcf"/><circle cx="1220" cy="385" r="14" stroke="#f6cfcf"/><circle cx="1252" cy="372" r="10" stroke="#f6cfcf"/><path d="M1328 385L1332 420" stroke="#8c2636" stroke-width="1"/><path d="M1468 290L1468 312" stroke="#555" stroke-width="1"/><path d="M1012 408L1085 403L1088 808L1015 806Z M1030 425L1070 422L1072 790L1030 792Z M1012 470L1000 472L1000 500L1012 500 M1085 580L1092 582L1092 640L1085 640" /><text x="1040" y="455" font-size="26.09" fill="#8c2636" stroke="#8c2636" stroke-width="1.1" font-family="'DejaVu Sans','Liberation Sans',sans-serif" textLength="320" lengthAdjust="spacingAndGlyphs" transform="rotate(90 1040 455)" >shoulder part1 (noscale)</text><path d="M1110 452L1360 452L1355 475L1335 480L1350 510L1315 765L1150 765L1115 510L1130 490L1105 475Z M1130 490L1170 495L1165 470L1310 470L1305 495L1335 480" /><circle cx="1365" cy="465" r="10" /><text x="1165" y="545" font-size="25.07" fill="#8c2636" stroke="#8c2636" stroke-width="1.1" font-family="'DejaVu Sans','Liberation Sans',sans-serif" textLength="125" lengthAdjust="spacingAndGlyphs" transform="rotate(40 1165 545)" >arm part4</text><path d="M1380 290L1400 285L1420 360L1455 355L1455 522L1418 520L1395 580L1380 600 M1420 360L1418 520" /><text x="1428" y="405" font-size="13.89" fill="#8c2636" stroke="none" font-family="'DejaVu Sans','Liberation Sans',sans-serif" textLength="78" lengthAdjust="spacingAndGlyphs" transform="rotate(90 1428 405)" font-weight="bold">arm part5</text><path d="M1360 620L1505 605L1530 680L1500 740L1440 770L1360 770Z M1440 690Q1470 660 1500 690L1480 740L1445 730Z" stroke="#f6cfcf"/><text x="1385" y="634" font-size="7.2" fill="#6a1a26" stroke="none" font-family="'DejaVu Sans','Liberation Sans',sans-serif" textLength="100" lengthAdjust="spacingAndGlyphs" font-weight="bold">shoulder part3 (noscale)</text><path d="M390 878L508 838L508 878" stroke="#b4b4b4"/></g>
<g transform="translate(440,130) scale(0.25641)" stroke="#cad4ca" ><path d="M190 295L255 295Q270 300 272 320Q300 400 340 470Q355 520 352 600L350 740Q345 790 325 835L292 830Q270 760 265 690L262 480Q240 400 210 340Z" stroke="#f28cf2"/><path d="M292 292L455 275Q480 290 500 320Q545 380 565 450L572 690L500 700Q485 710 495 722L570 730L572 790Q540 830 480 845L455 855Q400 820 372 775L378 520L460 515L465 488L380 483Q350 400 300 320Z" stroke="#f28cf2"/><text x="262" y="562" font-size="23" fill="#333" stroke="none" font-family="'DejaVu Sans','Liberation Sans',sans-serif" transform="rotate(90 262 562)" >leg</text><text x="466" y="415" font-size="23" fill="#333" stroke="none" font-family="'DejaVu Sans','Liberation Sans',sans-serif" transform="rotate(90 466 415)" >leg</text><path d="M960 42L1035 75L1038 115L1158 160L1165 395L1185 500Q1205 580 1140 588Q1085 580 1092 525Q1100 500 1140 492L1150 462L1145 408L1165 405 M1040 128L1158 172 M960 42L958 300L975 300L975 272Q986 258 998 272L998 310L1030 310L1032 165Q1062 165 1072 140 M958 300L958 385" stroke="#a9b9a9"/><path d="M1112 520L1158 520L1175 550L1158 578L1112 578L1098 550Z" /><path d="M1100 440L1112 436L1128 488L1116 492Z M1148 408L1170 406L1172 462L1150 464Z" /><text x="985" y="358" font-size="32.34" fill="#9cb29c" stroke="#9cb29c" stroke-width="0.6" font-family="'DejaVu Sans','Liberation Sans',sans-serif" textLength="170" lengthAdjust="spacingAndGlyphs" transform="rotate(-8 985 358)" >spine left2</text><path d="M940 385Q1090 400 1085 540Q1070 640 960 655 M940 392Q1080 408 1076 540Q1062 632 960 646 M940 400Q1070 416 1067 540Q1054 624 962 637" /><circle cx="945" cy="520" r="40" /><circle cx="945" cy="520" r="33" /><circle cx="905" cy="620" r="15" /><path d="M940 385L930 470L905 478L905 560L890 600L895 680L885 720L930 715L935 730L1000 710L1030 690L1012 655 M930 560L930 655L960 655" /><text x="960" y="606" font-size="15.78" fill="#2a3a2a" stroke="none" font-family="'DejaVu Sans','Liberation Sans',sans-serif" textLength="70" lengthAdjust="spacingAndGlyphs" font-weight="bold">spine15</text><path d="M1120 605L1175 612L1230 605L1235 690L1245 700L1240 790L1215 800L1140 800L1110 780L1105 700L1120 690Z" /><text x="1145" y="725" font-size="20.49" fill="#9cb29c" stroke="none" font-family="'DejaVu Sans','Liberation Sans',sans-serif" textLength="68" lengthAdjust="spacingAndGlyphs" >spine1</text><path d="M1305 525L1395 505L1400 640L1440 690L1430 790L1370 840L1280 810L1270 780L1285 700L1270 620L1300 580Z" /><text x="1315" y="716" font-size="16.23" fill="#2a3a2a" stroke="none" font-family="'DejaVu Sans','Liberation Sans',sans-serif" textLength="72" lengthAdjust="spacingAndGlyphs" font-weight="bold">spine14</text><path d="M1210 95L1430 265L1385 365L1345 395L1310 395L1300 420L1340 440L1395 440L1390 490L1215 520L1200 470L1180 280Z" /><text x="1340" y="300" font-size="17.41" fill="#2a3a2a" stroke="none" font-family="'DejaVu Sans','Liberation Sans',sans-serif" textLength="105" lengthAdjust="spacingAndGlyphs" transform="rotate(160 1340 300)" font-weight="bold">yeti studio</text><text x="1350" y="322" font-size="17.11" fill="#2a3a2a" stroke="none" font-family="'DejaVu Sans','Liberation Sans',sans-serif" textLength="66" lengthAdjust="spacingAndGlyphs" transform="rotate(160 1350 322)" font-weight="bold">gaudi5</text><path d="M722 680L820 665Q870 690 862 740Q850 790 722 790Z M722 720L795 720L795 738L722 740" stroke="#bdbdbd"/><path d="M975 740L1075 740L1080 800Q1050 850 1010 850Q975 830 975 740Z" /><path d="M995 790L1015 778L1062 812L1042 826Z" /><text x="992" y="800" font-size="13.08" fill="#2a3a2a" stroke="none" font-family="'DejaVu Sans','Liberation Sans',sans-serif" textLength="58" lengthAdjust="spacingAndGlyphs" transform="rotate(36 992 800)" font-weight="bold">spine12</text></g>
<g transform="translate(800,130) scale(0.25602)" stroke="#cad4ca" ><path d="M355 70L460 120L480 485L385 490L345 340L335 175L348 165Z M440 110L428 230L445 485" stroke="#a9b9a9"/><path d="M462 125L640 120L645 235L585 235Q530 250 528 300Q540 350 600 352L640 352L642 235 M625 355L628 500L600 515L580 515L535 480L480 482" stroke="#a9b9a9"/><path d="M580 290L638 288L638 300L605 300Q605 318 590 318Q580 315 580 290" /><text x="498" y="442" font-size="32.54" fill="#9cb29c" stroke="#9cb29c" stroke-width="0.6" font-family="'DejaVu Sans','Liberation Sans',sans-serif" textLength="108" lengthAdjust="spacingAndGlyphs" transform="rotate(-27 498 442)" >spine3</text><path d="M318 460L345 465L350 450L378 460L370 500L355 530L315 555Z" /><text x="320" y="499" font-size="10.37" fill="#2a3a2a" stroke="none" font-family="'DejaVu Sans','Liberation Sans',sans-serif" textLength="46" lengthAdjust="spacingAndGlyphs" font-weight="bold">spine13</text><path d="M145 515Q165 500 190 520L185 570L220 590L215 640L165 665L160 690L130 680L125 665L90 670L95 620L150 590Z M114 638L128 638L128 652L114 652Z" /><text x="130" y="614" font-size="12.84" fill="#2a3a2a" stroke="none" font-family="'DejaVu Sans','Liberation Sans',sans-serif" textLength="48" lengthAdjust="spacingAndGlyphs" font-weight="bold">spine7</text><path d="M150 735Q165 720 180 730L225 770Q235 790 215 790L160 760Z" /><text x="172" y="750" font-size="10.16" fill="#2a3a2a" stroke="none" font-family="'DejaVu Sans','Liberation Sans',sans-serif" textLength="38" lengthAdjust="spacingAndGlyphs" transform="rotate(25 172 750)" font-weight="bold">spine2</text><path d="M252 600L340 575L405 870L325 878L305 870Z M262 615L330 595L340 680Q330 720 285 725 M300 740L330 735L350 860" /><text x="350" y="762" font-size="11.77" fill="#2a3a2a" stroke="none" font-family="'DejaVu Sans','Liberation Sans',sans-serif" textLength="44" lengthAdjust="spacingAndGlyphs" transform="rotate(82 350 762)" font-weight="bold">spine6</text><path d="M430 525L470 508L655 555L650 610L625 650L555 640L490 630L475 580Z" /><circle cx="553" cy="632" r="9" /><text x="592" y="560" font-size="13.37" fill="#2a3a2a" stroke="none" font-family="'DejaVu Sans','Liberation Sans',sans-serif" textLength="50" lengthAdjust="spacingAndGlyphs" transform="rotate(90 592 560)" font-weight="bold">spine5</text><path d="M415 780L440 750L470 700L570 670L590 690L570 720L510 740L515 770L490 810L470 800Z M478 710L495 705L500 730L482 735Z" /><circle cx="500" cy="762" r="12" /><text x="445" y="786" font-size="12.3" fill="#2a3a2a" stroke="none" font-family="'DejaVu Sans','Liberation Sans',sans-serif" textLength="46" lengthAdjust="spacingAndGlyphs" font-weight="bold">spine8</text><path d="M450 830Q470 820 490 835L490 878L450 870Z" /><text x="455" y="860" font-size="8.02" fill="#2a3a2a" stroke="none" font-family="'DejaVu Sans','Liberation Sans',sans-serif" textLength="30" lengthAdjust="spacingAndGlyphs" font-weight="bold">spine4</text></g>
<g transform="translate(800,330) scale(0.25602)" stroke="#c4c4f6" ><path d="M176 204L325 204L320 259L310 343L191 343L188 354L95 354L94.5 326L64 326L64 302L163 256L163 248L139 253L135.5 240Q142 222 157 214Z M207 263.5L318 263.5 M207 266L318 266 M207 263.5Q188 285 187 305L191 343 M250.5 321L250.5 298Q252 291 262 291Q276 293 275 305Q272 312 262 312L252 311 M268 317L306 321" stroke="#aeaef3"/><path d="M70 395L120 365L250 362L290 365L410 385L485 420L435 575L105 630L55 560L65 540L100 495Z" stroke="#aeaef3"/><path d="M70 395L120 365L250 365L410 388 M70 395L105 497" stroke="#a4a4ee" stroke-width="1.3"/><path d="M410 388L432 405L420 480L395 485L385 510L270 508L265 580L135 600L110 560L150 548L148 525L195 520L195 508L150 510L140 490L105 500" stroke="#aeaef3"/><path d="M80 680L120 665L125 640L225 640L235 665L255 645L310 660L315 670L368 665L365 698L320 700L318 690L250 692L240 680L215 703L160 703L152 680L120 685L115 705L82 712Z" /><path d="M440 612L488 610L498 650L578 712L580 815L465 810L468 775L492 765L490 700L460 670L428 665Z" /><path d="M780 45L720 60L715 115L680 115L655 200L635 345L660 490L680 572L715 572L725 625L775 638L915 600L940 570L920 440L895 345L915 240L945 115L915 80Z" /><path d="M672 195L755 200L765 220L825 225L835 195L895 195L900 215L860 235L855 345 M672 195L668 490L755 480L765 462L825 455L840 490L895 492L900 470L860 455L855 345 M840 60L825 120L880 140L885 160L930 170 M835 618L825 560L880 545L885 520L935 515 M862 118L880 118L880 134L862 134Z M858 550L878 550L878 568L858 568Z" /><path d="M635 343L895 345" stroke="#a8a8ee" stroke-width="1.6"/><path d="M942 38L1045 38L1065 150L1035 260L980 295L942 285L965 150Z" /><path d="M1072 38L1120 32Q1170 45 1168 85Q1150 125 1100 122L1072 118Z M1072 78L1118 74L1118 86L1072 90" /><path d="M1075 210L1100 212L1130 280L1105 385L1015 465L930 408L1030 300Z" /><path d="M1062 448L1120 442Q1160 455 1155 495Q1140 530 1100 532L1058 528Z M1062 488L1105 485L1105 495L1062 498" /><path d="M965 490L1025 488L1030 528L965 530Z M1005 490L1030 528" /><path d="M958 552L1045 545L1050 575L1075 585L1030 790L960 805Z" /><path d="M640 678L760 682L890 672L895 765L858 792L655 745Z M900 672L938 672L940 735L900 738Z M900 738L935 672" /><path d="M140 735L160 728L335 800L350 830L335 878 M150 790Q175 780 180 800Q165 815 155 810" /></g>
<g transform="translate(800,540) scale(0.27309)" stroke="#c4c4f6" ><path d="M82 0L95 95L135 92L250 100Q310 80 330 0 M140 0L130 92 M180 80Q170 25 205 22Q240 25 235 80Z M300 0L290 30L250 45L245 100 M82 10Q100 15 95 30 M203 52L203 75M203 52Q215 52 213 62L203 64" /><path d="M472 40L660 40L655 155L610 155L608 170L492 168Z M660 40L880 40L678 232L650 200L758 105L740 40 M650 95L735 90L740 150L648 155Z M680 100L725 98L728 130L685 132Z M740 40L830 40L810 52L745 50" /><circle cx="605" cy="102" r="8" /><circle cx="770" cy="95" r="4" /><circle cx="500" cy="155" r="4" /><circle cx="712" cy="155" r="5" /><path d="M50 185L195 185L210 245L245 232L330 225L345 180L410 178L412 160Q455 160 462 205L460 225L440 228L438 285L425 300L460 302L460 352L415 352L412 368L365 370L370 460L295 470L305 512L165 608L125 605L130 555L100 540L110 440L75 350L55 280Z" /><path d="M140 200Q135 240 175 245L205 240 M245 232L248 295L330 305L332 368L365 370 M385 310L440 308L440 340L408 345L385 340Z M262 468Q255 385 340 375L368 375L370 458Z M312 440Q310 415 325 415Q335 420 333 440L365 440 M312 440L312 452L365 455" /></g>
<g transform="translate(40,575) scale(0.23092)" stroke="#c8c8c8" ><path d="M40 178L150 113L235 175L372 245L335 370L318 520L318 700L332 860 M45 475L125 470Q150 490 142 560L120 585L60 595L125 860" stroke="#9c9c9c"/><text x="45" y="318" font-size="44.61" fill="#222" stroke="#222" stroke-width="1" font-family="'DejaVu Sans','Liberation Sans',sans-serif" textLength="232" lengthAdjust="spacingAndGlyphs" transform="rotate(6 45 318)" font-style="italic">leg front 1</text><text x="102" y="408" font-size="50.22" fill="#222" stroke="#222" stroke-width="1" font-family="'DejaVu Sans','Liberation Sans',sans-serif" textLength="118" lengthAdjust="spacingAndGlyphs" transform="rotate(5 102 408)" font-style="italic">right</text><path d="M402 268L665 268L655 470L668 480L590 520L575 500L555 510L500 480L535 430L565 412L435 392Z" /><text x="462" y="370" font-size="20.49" fill="#333" stroke="none" font-family="'DejaVu Sans','Liberation Sans',sans-serif" textLength="108" lengthAdjust="spacingAndGlyphs" transform="rotate(-28 462 370)" >foot right1</text><circle cx="640" cy="363" r="13" stroke="#f3b0f3"/><path d="M703 268L990 270L985 395L870 515L755 465L738 350L848 335L850 300L920 305Q950 320 945 380L968 395L985 385 M738 350L742 380L845 375" /><text x="886" y="460" font-size="23.01" fill="#333" stroke="none" font-family="'DejaVu Sans','Liberation Sans',sans-serif" textLength="142" lengthAdjust="spacingAndGlyphs" transform="rotate(-82 886 460)" >leg between</text><path d="M738 472L783 612L672 700L685 720L740 712L772 735L745 825L700 805L635 800L615 715L590 708L575 745L495 745L462 630Z M540 678L625 678L627 710L545 712Z M632 775L698 778L696 803L634 800Z M520 685L535 685L535 700L520 698Z" /><circle cx="567" cy="707" r="15" stroke="#f3b0f3"/><text x="605" y="614" font-size="23.69" fill="#222" stroke="none" font-family="'DejaVu Sans','Liberation Sans',sans-serif" textLength="115" lengthAdjust="spacingAndGlyphs" >I.foi toitet</text><path d="M935 458L970 462L997 760L845 728L848 640L832 595L860 545L905 510Z M855 675L880 675L880 722L855 722Z" /><text x="930" y="688" font-size="20.92" fill="#333" stroke="none" font-family="'DejaVu Sans','Liberation Sans',sans-serif" textLength="95" lengthAdjust="spacingAndGlyphs" transform="rotate(-62 930 688)" >foot left2</text><path d="M460 860L545 808L640 838L830 835L935 805L980 850L970 862" /><path d="M1062 185L1175 118L1385 42L1388 860 M1062 185L1090 585L1180 860" stroke="#a8a8a8"/></g>
<rect x="835.2" y="751" width="304" height="22.8" fill="#484848" stroke="none"/>
<g stroke="none"><path d="M1024 751L1097 751L1098 760L1090 768L1075 773.800L1030 773.800L1022 762Z" fill="#232323"/><path d="M1006 773.800L1012 766L1022 758L1030 752L1040 760L1044 773.800Z" fill="#23405c"/><path d="M1046 773.800L1052 756L1062 752L1070 760L1086 770L1104 773.800Z" fill="#21384f"/><path d="M997 773.800L1008 768L1012 773.800Z" fill="#2a4a68"/><rect x="1043.400" y="758" width="2.400" height="15.800" fill="#bdbdbd"/><circle cx="1057.400" cy="766" r="1.100" fill="#e62020"/><circle cx="1070.500" cy="767" r="1.100" fill="#e62020"/></g>
<text x="835.6" y="749.4" font-size="3.03" fill="#111" stroke="none" font-family="'DejaVu Sans','Liberation Sans',sans-serif" textLength="100" lengthAdjust="spacingAndGlyphs" >(c) The Force Studio 2015, Paper Revolution, Pilsner8, 12-12-2016</text>
</g></g></svg>
<div class="a" style="left:1160.5px;top:77.5px;width:8px;height:718px;background:#f0f0f0;"></div>
<div class="a" style="left:1168.2px;top:79px;width:2px;height:717px;background:#2e2e2e;"></div>
<div class="a" style="left:1168.2px;top:79px;width:378.6px;height:2px;background:#2e2e2e;"></div>
<div class="a" style="left:1170.2px;top:81px;width:376.6px;height:715px;background:#f0f0f0;"></div>
<div class="a" style="left:1170.2px;top:103px;width:375px;height:1.6px;background:#c4c4c4;"></div>
<div class="a" style="left:1546.4px;top:81px;width:1.2px;height:715px;background:#f8f8f8;"></div>
<div class="a" style="left:1547.4px;top:77.5px;width:13px;height:718px;background:#ffffff;"></div>
<svg width="1560" height="879">
<rect x="1171.2" y="91.0" width="7.6" height="8" fill="#f4c430" stroke="#8a6d10" stroke-width=".8"/><path d="M1177.4 85.8 l1.800 1.400 l1.600 -1 l1.600 1 l1.800 -1.400 l.6 2.400 l-1.800 1.400 v5.600 l1.800 1.400 l-.6 2.400 l-1.800 -1.400 l-1.600 1 l-1.600 -1 l-1.800 1.400 l-.6 -2.400 l1.800 -1.400 v-5.600 l-1.800 -1.400z" fill="#dcdcdc" stroke="#3a3a3a" stroke-width=".9"/>
<rect x="1503.6" y="86.2" width="11.6" height="10.8" rx="1.6" fill="#f6f6f6" stroke="#8a8a8a" stroke-width="1"/><path d="M1511.4 89l-4 2.6l4 2.6z" fill="#555"/>
<rect x="1527" y="86.2" width="11.6" height="10.8" rx="1.6" fill="#f6f6f6" stroke="#8a8a8a" stroke-width="1"/><path d="M1530 88.8l5.6 5.6M1535.600 88.8l-5.6 5.6" stroke="#444" stroke-width="1.6"/>
</svg>
<span class="t" style="left:1186.00px;top:85.60px;font-size:12.6px;color:#111;font-family:'Liberation Sans',sans-serif;letter-spacing:-0.046px;">Свойства объекта (Shift+Ctrl+O)</span>
<span class="t" style="left:1309.60px;top:119.18px;font-size:12.4px;color:#7d7d7d;font-family:'Liberation Sans',sans-serif;letter-spacing:-0.148px;"><u>I</u>D:</span>
<span class="t" style="left:1286.00px;top:147.38px;font-size:12.4px;color:#7d7d7d;font-family:'Liberation Sans',sans-serif;letter-spacing:0.055px;"><u>М</u>етка:</span>
<span class="t" style="left:1267.00px;top:175.58px;font-size:12.4px;color:#7d7d7d;font-family:'Liberation Sans',sans-serif;letter-spacing:-0.095px;"><u>Н</u>азвание:</span>
<span class="t" style="left:1179.60px;top:202.58px;font-size:12.4px;color:#7d7d7d;font-family:'Liberation Sans',sans-serif;letter-spacing:0.046px;">Отрисовка <u>и</u>зображения:</span>
<span class="t" style="left:1180.60px;top:225.58px;font-size:12.4px;color:#7d7d7d;font-family:'Liberation Sans',sans-serif;letter-spacing:-0.011px;">Опи<u>с</u>ание:</span>
<div class="a" style="left:1328.4px;top:113px;width:207px;height:23.6px;background:#f0f0f0;border:1px solid #cdcdcd;"></div>
<div class="a" style="left:1328.4px;top:141.8px;width:207px;height:23.4px;background:#f0f0f0;border:1px solid #cdcdcd;"></div>
<div class="a" style="left:1328.4px;top:170.4px;width:207px;height:23.2px;background:#f0f0f0;border:1px solid #cdcdcd;"></div>
<div class="a" style="left:1328.4px;top:199.2px;width:189px;height:20.4px;background:#f0f0f0;border:1px solid #cdcdcd;"></div>
<div class="a" style="left:1517px;top:199.2px;width:18.4px;height:20.4px;background:#cccccc;border:1px solid #bdbdbd;"></div>
<svg width="1560" height="879"><path d="M1521.6 207.4l4.4 4.2l4.400-4.2" fill="none" stroke="#9a9a9a" stroke-width="1.1"/></svg>
<div class="a" style="left:1181px;top:245px;width:352px;height:204.6px;background:#f0f0f0;border-top:1px solid #adadad;border-left:1px solid #bcbcbc;border-right:1px solid #f8f8f8;border-bottom:1px solid #f8f8f8;"></div>
<div class="a" style="left:1181px;top:468px;width:13.6px;height:13px;background:#ffffff;border:1px solid #d6d6d6;"></div>
<span class="t" style="left:1201.40px;top:467.58px;font-size:12.4px;color:#7d7d7d;font-family:'Liberation Sans',sans-serif;letter-spacing:0.112px;">С<u>к</u>рыть</span>
<div class="a" style="left:1300px;top:468px;width:13.6px;height:13px;background:#ffffff;border:1px solid #d6d6d6;"></div>
<span class="t" style="left:1320.00px;top:467.58px;font-size:12.4px;color:#7d7d7d;font-family:'Liberation Sans',sans-serif;letter-spacing:0.142px;">За<u>б</u>локировать</span>
<div class="a" style="left:1418px;top:462.2px;width:116.6px;height:23.8px;background:#cccccc;border:1px solid #c2c2c2;"></div>
<span class="t" style="left:1443.00px;top:467.58px;font-size:12.4px;color:#7d7d7d;font-family:'Liberation Sans',sans-serif;letter-spacing:0.032px;"><u>У</u>становить</span>
<svg width="1560" height="879"><rect x="1179.4" y="497.4" width="8.6" height="8.6" fill="#fff" stroke="#8a8fa8" stroke-width="1"/><path d="M1181.4 501.7h4.6M1183.7 499.4v4.6" stroke="#2a3a78" stroke-width="1"/></svg>
<span class="t" style="left:1194.00px;top:495.38px;font-size:12.4px;color:#7d7d7d;font-family:'Liberation Sans',sans-serif;letter-spacing:0.078px;"><u>И</u>нтерактивность</span>
<div class="a" style="left:1172.8px;top:520.2px;width:371.2px;height:20.4px;background:#e1e1e1;border:1px solid #adadad;"></div>
<span class="t" style="left:1194.80px;top:523.18px;font-size:12.4px;color:#111;font-family:'Liberation Sans',sans-serif;letter-spacing:0.005px;">Экспортировать в PNG (Shift+Ctrl+E)</span>
<svg width="1560" height="879"><path d="M1528.6 532.6l4-4.4l4 4.400z" fill="#7a7a7a"/></svg>
<div class="a" style="left:1172.8px;top:545.37px;width:371.2px;height:20.4px;background:#e1e1e1;border:1px solid #adadad;"></div>
<span class="t" style="left:1192.60px;top:548.35px;font-size:12.4px;color:#111;font-family:'Liberation Sans',sans-serif;letter-spacing:0.059px;">Заливка и обводка (Shift+Ctrl+F)</span>
<svg width="1560" height="879"><path d="M1528.6 557.8l4-4.4l4 4.400z" fill="#7a7a7a"/></svg>
<div class="a" style="left:1172.8px;top:570.54px;width:371.2px;height:20.4px;background:#e1e1e1;border:1px solid #adadad;"></div>
<span class="t" style="left:1192.60px;top:573.52px;font-size:12.4px;color:#111;font-family:'Liberation Sans',sans-serif;letter-spacing:0.172px;">Слои (Shift+Ctrl+L)</span>
<svg width="1560" height="879"><path d="M1528.6 582.9l4-4.4l4 4.400z" fill="#7a7a7a"/></svg>
<div class="a" style="left:1172.8px;top:595.71px;width:371.2px;height:20.4px;background:#cce4f7;border:1px solid #2a78c8;"></div>
<span class="t" style="left:1192.60px;top:598.69px;font-size:12.4px;color:#111;font-family:'Liberation Sans',sans-serif;letter-spacing:0.076px;">Свойства объекта (Shift+Ctrl+O)</span>
<svg width="1560" height="879"><path d="M1528.6 608.1l4-4.4l4 4.400z" fill="#111"/></svg>
<svg width="1560" height="879">
<path d="M1176.400 522.600h6.600l3.400 3.400v11.800h-10z" fill="#fbfbfb" stroke="#3a3a3a" stroke-width="1.1"/><path d="M1183 522.600v3.400h3.400" fill="#ddd" stroke="#3a3a3a" stroke-width=".8"/><path d="M1182.600 531.200h5.400" stroke="#111" stroke-width="1.700"/><path d="M1187.200 528.200l3.800 3l-3.800 3z" fill="#111"/>
<path d="M1175.600 547.800h12.400v12.800h-12.400z" fill="#fdfdfd" stroke="#555" stroke-width=".9"/><path d="M1175.600 547.800v12.800h6" fill="none" stroke="#111" stroke-width="1.500"/><path d="M1176.200 560.200q3.400-.6 6-3.600l3.600-5l2.800-2.400l-.6 3.400l-4.400 5.400q-3 2.600-7.400 2.200z" fill="#111"/><path d="M1185.800 551.200l3.400-3.600l1 1.600l-2.600 3.800z" fill="#e8a820"/>
<path d="M1175.600 576.600h10l3.800 2.400h-10z M1175.600 580.200h10l3.800 2.400h-10z M1175.600 583.800h10l3.800 2.400h-10z" fill="#fafafa" stroke="#2e2e2e" stroke-width="1"/><path d="M1175.600 576.600v8.800M1189.400 579v8" stroke="#2e2e2e" stroke-width="1"/><path d="M1179.400 586.600h10" stroke="#2e2e2e" stroke-width="1.600"/>
<rect x="1175.2" y="604.0" width="7.6" height="8" fill="#f4c430" stroke="#8a6d10" stroke-width=".8"/><path d="M1181.4 598.8 l1.800 1.400 l1.600 -1 l1.600 1 l1.800 -1.400 l.6 2.400 l-1.800 1.400 v5.600 l1.800 1.400 l-.6 2.400 l-1.800 -1.400 l-1.600 1 l-1.600 -1 l-1.800 1.400 l-.6 -2.400 l1.800 -1.400 v-5.600 l-1.800 -1.400z" fill="#dcdcdc" stroke="#3a3a3a" stroke-width=".9"/>
</svg>
<svg width="1560" height="879">
<rect x="1555.600" y="86" width="8" height="14" rx="1.6" fill="#fbfbfb" stroke="#9a9a9a"/>
<rect x="1555.400" y="114" width="8" height="12" fill="#cfe0a8" stroke="#7a8a58"/>
<rect x="1555.400" y="141" width="8" height="15" rx="1.6" fill="#3a5aa8" stroke="#2a3a78"/><rect x="1556" y="141.400" width="6" height="4" fill="#c8282c"/>
<path d="M1558.600 168v8h-3v8h6" fill="none" stroke="#666" stroke-width="1.6"/>
<path d="M1550 195.500h10M1550 318.400h10M1550 423.700h10M1550 519.400h10M1550 612.400h10M1550 683.700h10" stroke="#c4c4c4"/>
<path d="M1553.600 216h8M1558.400 209v14" stroke="#333" stroke-width="1.3"/>
<rect x="1555.400" y="236" width="8" height="14" fill="#fbfbfb" stroke="#555" stroke-width="1.2"/>
<rect x="1555.400" y="276.400" width="8" height="13" rx="1.600" fill="#e0e0e0" stroke="#8a8a8a"/><rect x="1555.400" y="302.600" width="8" height="13" rx="1.600" fill="#e0e0e0" stroke="#8a8a8a"/>
<rect x="1555.400" y="342" width="7" height="11" fill="#f4f4f4" stroke="#aaa"/><path d="M1556 366v6" stroke="#888"/><rect x="1555" y="371.400" width="8" height="5" fill="#e0a020"/><rect x="1555.400" y="392" width="8" height="13" rx="1.400" fill="#c8a060" stroke="#7a5a20"/>
<circle cx="1563" cy="446.0" r="7.400" fill="#e4e4e4" stroke="#444" stroke-width="1.400"/>
<circle cx="1563" cy="472.0" r="7.400" fill="#e4e4e4" stroke="#444" stroke-width="1.400"/>
<circle cx="1563" cy="499.4" r="7.400" fill="#e4e4e4" stroke="#444" stroke-width="1.400"/>
<rect x="1554.6" y="530.6" width="8" height="7" fill="#8ab0d8" stroke="#2c3e55" stroke-width="1.3"/><path d="M1557 537.6v5h4" fill="none" stroke="#2c3e55" stroke-width="1.300"/>
<rect x="1554.6" y="556.6" width="8" height="7" fill="#8ab0d8" stroke="#2c3e55" stroke-width="1.3"/><path d="M1557 563.6v5h4" fill="none" stroke="#2c3e55" stroke-width="1.300"/>
<rect x="1554.6" y="584.0" width="8" height="7" fill="#8ab0d8" stroke="#2c3e55" stroke-width="1.3"/><path d="M1557 591.0v5h4" fill="none" stroke="#2c3e55" stroke-width="1.300"/>
<path d="M1557 627v12h4" fill="none" stroke="#444" stroke-width="1.400" stroke-dasharray="2 1.600"/><path d="M1557 656v12h4" fill="none" stroke="#a88020" stroke-width="1.400" stroke-dasharray="2 1.600"/>
<rect x="1556.400" y="694.400" width="8" height="13" fill="#ddd" stroke="#222" stroke-width="1.600"/><path d="M1554.400 719h7v5" fill="none" stroke="#222" stroke-width="2"/>
</svg>
<div class="a" style="left:31.5px;top:774.5px;width:1109px;height:20.5px;background:#f0f0f0;"></div>
<div class="a" style="left:185.7px;top:777px;width:810px;height:15px;background:#cdcdcd;"></div>
<div class="a" style="left:1139.5px;top:95px;width:21px;height:700px;background:#f0f0f0;"></div>
<div class="a" style="left:1142.6px;top:128px;width:15px;height:287.5px;background:#cdcdcd;"></div>
<svg width="1560" height="879"><path d="M60 781l-3.700 3.700l3.700 3.700" fill="none" stroke="#3a3a3a" stroke-width="2"/><path d="M1128.400 781l3.700 3.700l-3.700 3.700" fill="none" stroke="#3a3a3a" stroke-width="2"/><path d="M1146.400 112.600l3.700-3.700l3.700 3.700" fill="none" stroke="#3a3a3a" stroke-width="2"/><path d="M1146.400 763.600l3.700 3.700l3.700-3.700" fill="none" stroke="#3a3a3a" stroke-width="2"/>
<circle cx="1149.6" cy="88.6" r="6.3" fill="#f4f4f4" stroke="#444" stroke-width="1.3"/><path d="M1154 93.4l4.4 4.4" stroke="#444" stroke-width="2" stroke-linecap="round"/><text x="1145.4" y="91.4" font-size="6.4" font-family="'Liberation Sans',sans-serif" fill="#555" textLength="8.4" lengthAdjust="spacingAndGlyphs">1:1</text>
<defs><linearGradient id="gCms" x1="0" y1="0" x2="1" y2="1"><stop offset="0" stop-color="#5fae5a"/><stop offset=".5" stop-color="#8fc67a"/><stop offset=".75" stop-color="#b08ad0"/><stop offset="1" stop-color="#c85a6a"/></linearGradient></defs><path d="M1146.200 777.400L1157 785.600L1148.600 792.800Z" fill="url(#gCms)"/><path d="M1146.200 777.400L1148.600 792.800L1151 786Z" fill="#4a9a48" opacity=".7"/>
</svg>
<div class="a" style="left:0px;top:795.6px;width:1560px;height:1.6px;background:#222;"></div>
<div class="a" style="left:0px;top:797.2px;width:16.3px;height:18px;background:#ffffff;"></div>
<svg width="1560" height="879"><path d="M.6 798l15 16.4M15.6 798l-15 16.4" stroke="#8a1818" stroke-width="1.6"/></svg>
<div class="a" style="left:16.3px;top:797.2px;width:18.17px;height:18px;background:#000000;"></div>
<div class="a" style="left:34.17px;top:797.2px;width:18.17px;height:18px;background:#1a1a1a;"></div>
<div class="a" style="left:52.04px;top:797.2px;width:18.17px;height:18px;background:#333333;"></div>
<div class="a" style="left:69.91px;top:797.2px;width:18.17px;height:18px;background:#4d4d4d;"></div>
<div class="a" style="left:87.78px;top:797.2px;width:18.17px;height:18px;background:#666666;"></div>
<div class="a" style="left:105.65px;top:797.2px;width:18.17px;height:18px;background:#808080;"></div>
<div class="a" style="left:123.52px;top:797.2px;width:18.17px;height:18px;background:#999999;"></div>
<div class="a" style="left:141.39px;top:797.2px;width:18.17px;height:18px;background:#b3b3b3;"></div>
<div class="a" style="left:159.26px;top:797.2px;width:18.17px;height:18px;background:#cccccc;"></div>
<div class="a" style="left:177.13px;top:797.2px;width:18.17px;height:18px;background:#e6e6e6;"></div>
<div class="a" style="left:195px;top:797.2px;width:18.17px;height:18px;background:#ececec;"></div>
<div class="a" style="left:212.87px;top:797.2px;width:18.17px;height:18px;background:#f2f2f2;"></div>
<div class="a" style="left:230.74px;top:797.2px;width:18.17px;height:18px;background:#f9f9f9;"></div>
<div class="a" style="left:248.61px;top:797.2px;width:18.17px;height:18px;background:#ffffff;"></div>
<div class="a" style="left:266.48px;top:797.2px;width:18.17px;height:18px;background:#800000;"></div>
<div class="a" style="left:284.35px;top:797.2px;width:18.17px;height:18px;background:#ff0000;"></div>
<div class="a" style="left:302.22px;top:797.2px;width:18.17px;height:18px;background:#808000;"></div>
<div class="a" style="left:320.09px;top:797.2px;width:18.17px;height:18px;background:#ffff00;"></div>
<div class="a" style="left:337.96px;top:797.2px;width:18.17px;height:18px;background:#008000;"></div>
<div class="a" style="left:355.83px;top:797.2px;width:18.17px;height:18px;background:#00ff00;"></div>
<div class="a" style="left:373.7px;top:797.2px;width:18.17px;height:18px;background:#008080;"></div>
<div class="a" style="left:391.57px;top:797.2px;width:18.17px;height:18px;background:#00ffff;"></div>
<div class="a" style="left:409.44px;top:797.2px;width:18.17px;height:18px;background:#000080;"></div>
<div class="a" style="left:427.31px;top:797.2px;width:18.17px;height:18px;background:#0000ff;"></div>
<div class="a" style="left:445.18px;top:797.2px;width:18.17px;height:18px;background:#800080;"></div>
<div class="a" style="left:463.05px;top:797.2px;width:18.17px;height:18px;background:#ff00ff;"></div>
<div class="a" style="left:480.92px;top:797.2px;width:18.17px;height:18px;background:#2b0000;"></div>
<div class="a" style="left:498.79px;top:797.2px;width:18.17px;height:18px;background:#550000;"></div>
<div class="a" style="left:516.66px;top:797.2px;width:18.17px;height:18px;background:#800000;"></div>
<div class="a" style="left:534.53px;top:797.2px;width:18.17px;height:18px;background:#aa0000;"></div>
<div class="a" style="left:552.4px;top:797.2px;width:18.17px;height:18px;background:#d40000;"></div>
<div class="a" style="left:570.27px;top:797.2px;width:18.17px;height:18px;background:#ff0000;"></div>
<div class="a" style="left:588.14px;top:797.2px;width:18.17px;height:18px;background:#ff2a2a;"></div>
<div class="a" style="left:606.01px;top:797.2px;width:18.17px;height:18px;background:#ff5555;"></div>
<div class="a" style="left:623.88px;top:797.2px;width:18.17px;height:18px;background:#ff8080;"></div>
<div class="a" style="left:641.75px;top:797.2px;width:18.17px;height:18px;background:#ffaaaa;"></div>
<div class="a" style="left:659.62px;top:797.2px;width:18.17px;height:18px;background:#ffd5d5;"></div>
<div class="a" style="left:677.49px;top:797.2px;width:18.17px;height:18px;background:#280b0b;"></div>
<div class="a" style="left:695.36px;top:797.2px;width:18.17px;height:18px;background:#501616;"></div>
<div class="a" style="left:713.23px;top:797.2px;width:18.17px;height:18px;background:#782121;"></div>
<div class="a" style="left:731.1px;top:797.2px;width:18.17px;height:18px;background:#a02c2c;"></div>
<div class="a" style="left:748.97px;top:797.2px;width:18.17px;height:18px;background:#c83737;"></div>
<div class="a" style="left:766.84px;top:797.2px;width:18.17px;height:18px;background:#d35f5f;"></div>
<div class="a" style="left:784.71px;top:797.2px;width:18.17px;height:18px;background:#de8787;"></div>
<div class="a" style="left:802.58px;top:797.2px;width:18.17px;height:18px;background:#e9afaf;"></div>
<div class="a" style="left:820.45px;top:797.2px;width:18.17px;height:18px;background:#f4d7d7;"></div>
<div class="a" style="left:838.32px;top:797.2px;width:18.17px;height:18px;background:#241c1c;"></div>
<div class="a" style="left:856.19px;top:797.2px;width:18.17px;height:18px;background:#483737;"></div>
<div class="a" style="left:874.06px;top:797.2px;width:18.17px;height:18px;background:#6c5353;"></div>
<div class="a" style="left:891.93px;top:797.2px;width:18.17px;height:18px;background:#916f6f;"></div>
<div class="a" style="left:909.8px;top:797.2px;width:18.17px;height:18px;background:#ac9393;"></div>
<div class="a" style="left:927.67px;top:797.2px;width:18.17px;height:18px;background:#c8b7b7;"></div>
<div class="a" style="left:945.54px;top:797.2px;width:18.17px;height:18px;background:#e3dbdb;"></div>
<div class="a" style="left:963.41px;top:797.2px;width:18.17px;height:18px;background:#2b1100;"></div>
<div class="a" style="left:981.28px;top:797.2px;width:18.17px;height:18px;background:#552200;"></div>
<div class="a" style="left:999.15px;top:797.2px;width:18.17px;height:18px;background:#803300;"></div>
<div class="a" style="left:1017.02px;top:797.2px;width:18.17px;height:18px;background:#aa4400;"></div>
<div class="a" style="left:1034.89px;top:797.2px;width:18.17px;height:18px;background:#d45500;"></div>
<div class="a" style="left:1052.76px;top:797.2px;width:18.17px;height:18px;background:#ff6600;"></div>
<div class="a" style="left:1070.63px;top:797.2px;width:18.17px;height:18px;background:#ff7f2a;"></div>
<div class="a" style="left:1088.5px;top:797.2px;width:18.17px;height:18px;background:#ff9955;"></div>
<div class="a" style="left:1106.37px;top:797.2px;width:18.17px;height:18px;background:#ffb380;"></div>
<div class="a" style="left:1124.24px;top:797.2px;width:18.17px;height:18px;background:#ffccaa;"></div>
<div class="a" style="left:1142.11px;top:797.2px;width:18.17px;height:18px;background:#ffe6d5;"></div>
<div class="a" style="left:1159.98px;top:797.2px;width:18.17px;height:18px;background:#28170b;"></div>
<div class="a" style="left:1177.85px;top:797.2px;width:18.17px;height:18px;background:#502d16;"></div>
<div class="a" style="left:1195.72px;top:797.2px;width:18.17px;height:18px;background:#784421;"></div>
<div class="a" style="left:1213.59px;top:797.2px;width:18.17px;height:18px;background:#a05a2c;"></div>
<div class="a" style="left:1231.46px;top:797.2px;width:18.17px;height:18px;background:#c87137;"></div>
<div class="a" style="left:1249.33px;top:797.2px;width:18.17px;height:18px;background:#d38d5f;"></div>
<div class="a" style="left:1267.2px;top:797.2px;width:18.17px;height:18px;background:#deaa87;"></div>
<div class="a" style="left:1285.07px;top:797.2px;width:18.17px;height:18px;background:#e9c6af;"></div>
<div class="a" style="left:1302.94px;top:797.2px;width:18.17px;height:18px;background:#f4e3d7;"></div>
<div class="a" style="left:1320.81px;top:797.2px;width:18.17px;height:18px;background:#241f1c;"></div>
<div class="a" style="left:1338.68px;top:797.2px;width:18.17px;height:18px;background:#483e37;"></div>
<div class="a" style="left:1356.55px;top:797.2px;width:18.17px;height:18px;background:#6c5d53;"></div>
<div class="a" style="left:1374.42px;top:797.2px;width:18.17px;height:18px;background:#917c6f;"></div>
<div class="a" style="left:1392.29px;top:797.2px;width:18.17px;height:18px;background:#ac9d93;"></div>
<div class="a" style="left:1410.16px;top:797.2px;width:18.17px;height:18px;background:#c8beb7;"></div>
<div class="a" style="left:1428.03px;top:797.2px;width:18.17px;height:18px;background:#e3dedb;"></div>
<div class="a" style="left:1445.9px;top:797.2px;width:18.17px;height:18px;background:#2b2200;"></div>
<div class="a" style="left:1463.77px;top:797.2px;width:18.17px;height:18px;background:#554400;"></div>
<div class="a" style="left:1481.64px;top:797.2px;width:18.17px;height:18px;background:#806600;"></div>
<div class="a" style="left:1499.51px;top:797.2px;width:18.17px;height:18px;background:#aa8800;"></div>
<div class="a" style="left:1517.38px;top:797.2px;width:18.17px;height:18px;background:#d4aa00;"></div>
<div class="a" style="left:1535.25px;top:797.2px;width:18.17px;height:18px;background:#ffcc00;"></div>
<div class="a" style="left:1553.12px;top:797.2px;width:18.17px;height:18px;background:#ffd42a;"></div>
<div class="a" style="left:0px;top:815.2px;width:1560px;height:20px;background:#f0f0f0;"></div>
<div class="a" style="left:13.8px;top:820px;width:322.4px;height:13.4px;background:#cdcdcd;"></div>
<svg width="1560" height="879"><path d="M7 823l-3.6 3.8l3.6 3.8" fill="none" stroke="#bdbdbd" stroke-width="1.5"/></svg>
<span class="t" style="left:-1.00px;top:836.32px;font-size:11.6px;color:#111;font-family:'Liberation Sans',sans-serif;letter-spacing:-0.047px;">Заливка:</span>
<span class="t" style="left:0.00px;top:850.92px;font-size:11.6px;color:#111;font-family:'Liberation Sans',sans-serif;letter-spacing:0.104px;">Обводка:</span>
<span class="t" style="left:79.50px;top:836.13px;font-size:11.8px;color:#111;font-family:'Liberation Sans',sans-serif;letter-spacing:0.436px;">Н/Д</span>
<span class="t" style="left:79.50px;top:850.73px;font-size:11.8px;color:#111;font-family:'Liberation Sans',sans-serif;letter-spacing:0.436px;">Н/Д</span>
<span class="t" style="left:130.00px;top:843.53px;font-size:11.8px;color:#222;font-family:'Liberation Sans',sans-serif;letter-spacing:-0.726px;font-weight:bold;">Н:</span>
<div class="a" style="left:143.6px;top:838.6px;width:37px;height:21.6px;background:#f0f0f0;border:1px solid #d0d0d0;"></div>
<span class="t" style="left:148.00px;top:842.80px;font-size:12.6px;color:#9a9a9a;font-family:'Liberation Sans',sans-serif;letter-spacing:-0.674px;">100</span>
<div class="a" style="left:181px;top:839.6px;width:11.4px;height:19.6px;background:#f0f0f0;border:1px solid #e0e0e0;"></div>
<svg width="1560" height="879"><path d="M183.7 846.6l3-3.2l3 3.2zM183.7 852.4l3 3.2l3-3.2z" fill="#666"/><path d="M196.2 836v28" stroke="#c8c8c8"/>
<path d="M203.4 850.6 Q210.4 844 217.6 850.6 Q210.4 856.4 203.4 850.6Z" fill="#f4f4f4" stroke="#333" stroke-width="1.1"/><circle cx="210.5" cy="850.4" r="2.7" fill="#222"/><path d="M205 846.6l-1.2-2.2M208 845l-.6-2.4M211.4 844.8l.2-2.4M214.4 845.8l1-2.2M216.6 847.6l1.6-1.6" stroke="#333" stroke-width="1"/>
<path d="M230.6 849v-2.6q0-3 3-3q2.8 0 3 2.4" fill="none" stroke="#555" stroke-width="1.3"/><rect x="229" y="849" width="9.6" height="7.4" rx="1" fill="#e4e0c8" stroke="#6d6950" stroke-width=".9"/><rect x="232.8" y="851" width="2" height="3" fill="#6d6950"/>
</svg>
<div class="a" style="left:246px;top:835.6px;width:59.4px;height:28.2px;background:#ffffff;border:1px solid #d9d9d9;"></div>
<span class="t" style="left:254.60px;top:844.04px;font-size:10.6px;color:#222;font-family:'Liberation Sans',sans-serif;letter-spacing:-0.010px;">(корень)</span>
<div class="a" style="left:305px;top:835.6px;width:17.6px;height:28.2px;background:#dddddd;border:1px solid #bdbdbd;"></div>
<svg width="1560" height="879"><path d="M309.4 848l4.4 4.4l4.4-4.4" fill="none" stroke="#444" stroke-width="1.1"/></svg>
<span class="t" style="left:330.00px;top:843.18px;font-size:12.4px;color:#111;font-family:'Liberation Sans',sans-serif;letter-spacing:0.183px;">Нет выделенных объектов. Используйте щелчок, Shift+щелчок, Alt+прокрутка колесом мыши, либо обведите объекты рамкой.</span>
<div class="a" style="left:1444px;top:836px;width:1px;height:29px;background:#c8c8c8;"></div>
<span class="t" style="left:1447.40px;top:837.04px;font-size:10.6px;color:#222;font-family:'Liberation Sans',sans-serif;letter-spacing:0.592px;">X:</span>
<span class="t" style="left:1466.80px;top:837.80px;font-size:10.8px;color:#111;font-family:'Liberation Mono',monospace;letter-spacing:0.819px;">574,12</span>
<span class="t" style="left:1447.40px;top:852.84px;font-size:10.6px;color:#222;font-family:'Liberation Sans',sans-serif;letter-spacing:0.885px;">Y:</span>
<span class="t" style="left:1466.80px;top:853.60px;font-size:10.8px;color:#111;font-family:'Liberation Mono',monospace;letter-spacing:0.819px;">101,81</span>
<span class="t" style="left:1520.00px;top:843.64px;font-size:10.6px;color:#222;font-family:'Liberation Sans',sans-serif;letter-spacing:0.790px;">Z:</span>
<div class="a" style="left:1532.6px;top:841.6px;width:30px;height:17px;background:#ffffff;border:1px solid #c4c4c4;"></div>
<span class="t" style="left:1542.40px;top:844.05px;font-size:10.8px;color:#222;font-family:'Liberation Sans',sans-serif;letter-spacing:-0.005px;">20%</span>
<div class="a" style="left:0px;top:865.4px;width:1560px;height:14px;background:#7b787e;"></div>
<div class="a" style="left:794px;top:865.4px;width:42px;height:14px;background:#a7a4aa;"></div>
<svg width="1560" height="879">
<path d="M13 879l4-2.4l12-1.6v4z" fill="#f2f2f2"/>
<path d="M62 875.6v4M66.600 875.600v4M73 875.600v4M78 875.600v4" fill="none" stroke="#e8e8e8" stroke-width="1.4"/>
<rect x="110" y="874.8" width="22" height="6" fill="#f3cf5e"/>
<rect x="110" y="874" width="9" height="2" fill="#e8b838"/>
<circle cx="165" cy="883.6" r="9.6" fill="#0c78d4"/>
<circle cx="208.6" cy="883.4" r="9.4" fill="#d8402c"/>
<rect x="242" y="875" width="21" height="5" fill="#a9d2ea"/>
<rect x="246" y="873.8" width="13" height="2" fill="#d6ecf6"/>
<rect x="285" y="875.4" width="18" height="5" fill="#d8d8d8"/>
<path d="M300 878l5-5.400l2 1.400l-4 5z" fill="#d08a30"/>
<circle cx="345" cy="880.6" r="4.6" fill="#8a48cc"/>
<circle cx="383" cy="884.6" r="11" fill="#18b244"/>
<rect x="415" y="873" width="25" height="7" fill="#3a3a3c"/>
<path d="M424 879l8-4v4z" fill="#e8902c"/>
<rect x="460" y="873.6" width="17" height="6" fill="#3c6ccc"/>
<rect x="464" y="875.6" width="9" height="4" fill="#f2f2f2"/>
<rect x="503" y="874.6" width="17" height="5" fill="#f6e6e6"/>
<rect x="503" y="874.6" width="17" height="1.4" fill="#d84848"/>
<rect x="546.6" y="873.6" width="23.4" height="6" fill="#1b1b5e"/>
<rect x="546.6" y="873.6" width="23.4" height="1" fill="#b8b8d8"/>
<rect x="592" y="877" width="20" height="3" fill="#3c7cd8"/>
<rect x="632" y="873.4" width="23" height="6" fill="#2858d4"/>
<path d="M634 875.600h19M634 878.400h19" fill="none" stroke="#9ab8f4" stroke-width="1.4"/>
<circle cx="687" cy="884" r="10.6" fill="#8cc23c"/>
<circle cx="729" cy="885.6" r="10" fill="#2a9ae0"/>
<rect x="760" y="872.8" width="25" height="7" fill="#e8801c"/>
<path d="M766 879v-4M772.600 879v-5M779 879v-4" fill="none" stroke="#fff" stroke-width="1.4"/>
<path d="M806 879l8.400-5l8.400 5z" fill="#f4f4f4"/>
<circle cx="858" cy="885.6" r="10.6" fill="#1a68cc"/>
<rect x="888" y="874.4" width="24" height="5" fill="#1fb0c0"/>
<rect x="899" y="873" width="12" height="2.4" fill="#e8d83c"/>
<path d="M933 879v-2.600l17-1.400v4z" fill="#8a2a9a"/>
<path d="M981 879l6-3l6 3z" fill="#e03030"/>
<path d="M1026 879l6-2h8v2z" fill="#2a7ad8"/>
<rect x="1040" y="877" width="7" height="2" fill="#2a7ad8"/>
<circle cx="1071" cy="886" r="11" fill="#1a9ae8"/>
<path d="M1107 879v-3l3 1.400h10l3-1.400v3z" fill="#e8a040"/>
<path d="M1154 879l7-3l7 3z" fill="#e4e4e4"/>
<rect x="1190" y="875" width="23" height="4" fill="#2a5ab8"/>
<rect x="1202" y="875.6" width="9" height="4" fill="#f2f2f2"/>
<path d="M1235 879v-2.600l18-1.400v4z" fill="#8a2a9a"/>
</svg>
<div class="a" style="left:1290.6px;top:857.2px;width:272px;height:24px;background:#ffffe1;border:1px solid #111;"></div>
<span class="t" style="left:1294.00px;top:859.35px;font-size:12px;color:#111;font-family:'Liberation Sans',sans-serif;letter-spacing:0.233px;">Нет выделенных объектов. Используйте</span>
<span class="t" style="left:1294.00px;top:875.95px;font-size:12px;color:#111;font-family:'Liberation Sans',sans-serif;letter-spacing:0.727px;">щелчок, Shift+щелчок, Alt+прокрутка</span>
</body></html>
